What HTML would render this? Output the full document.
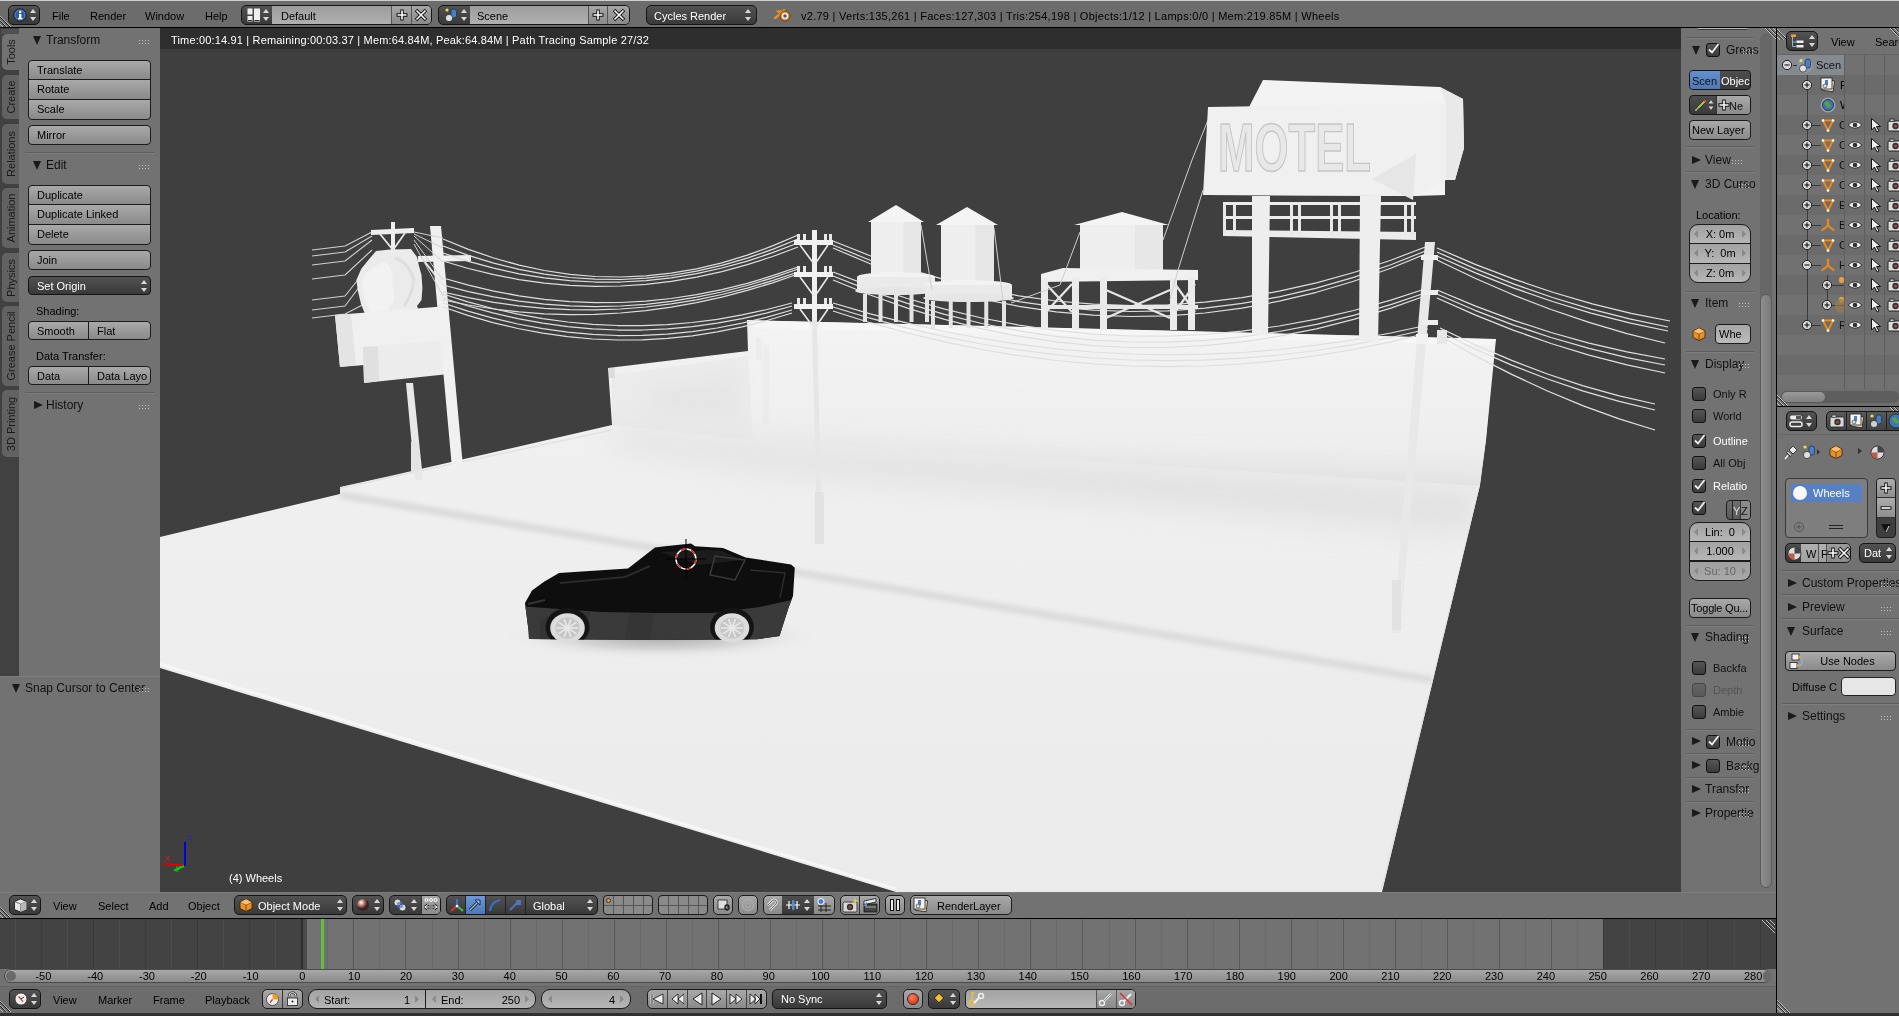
<!DOCTYPE html>
<html><head><meta charset="utf-8">
<style>
*{box-sizing:border-box;margin:0;padding:0}
html,body{width:1899px;height:1016px;overflow:hidden}
body{will-change:transform}
body{background:#727272;font-family:"Liberation Sans",sans-serif;font-size:11px;color:#000;position:relative}
.a{position:absolute}
.t{position:absolute;white-space:nowrap;line-height:11px}
.w{color:#fff}
.b{position:absolute;border:1px solid #1c1c1c;border-radius:4px;background:linear-gradient(#a9a9a9,#8a8a8a);white-space:nowrap;line-height:17px;padding-top:1px;overflow:hidden}
.m{position:absolute;border:1px solid #151515;border-radius:4px;background:linear-gradient(#525252,#393939);color:#fff;white-space:nowrap;line-height:17px;padding-top:1px;overflow:hidden}
.n{position:absolute;border:1px solid #1c1c1c;border-radius:9px;background:linear-gradient(#a2a2a2,#b6b6b6);white-space:nowrap;line-height:17px;padding-top:1px;overflow:hidden}
.tf{position:absolute;background:linear-gradient(#9c9c9c,#b0b0b0)}
.sep{position:absolute;height:1px;background:#5e5e5e;border-bottom:1px solid #7e7e7e;height:2px}
.tri{position:absolute;width:0;height:0;border-left:4.5px solid transparent;border-right:4.5px solid transparent;border-top:9px solid #1a1a1a}
.trr{position:absolute;width:0;height:0;border-top:4.5px solid transparent;border-bottom:4.5px solid transparent;border-left:9px solid #1a1a1a}
.grip{position:absolute;width:11px;height:5px;background-image:radial-gradient(circle,#c8c8c8 0.7px,transparent 0.9px);background-size:3px 3px;opacity:.9}
.ck{position:absolute;width:14px;height:14px;border:1px solid #111;border-radius:3px;background:linear-gradient(#555,#3a3a3a)}
.ud{position:absolute;width:6px;height:12px}
.ud:before{content:"";position:absolute;left:0;top:0;border-left:3px solid transparent;border-right:3px solid transparent;border-bottom:4px solid #d8d8d8}
.ud:after{content:"";position:absolute;left:0;bottom:0;border-left:3px solid transparent;border-right:3px solid transparent;border-top:4px solid #d8d8d8}
.tab{position:absolute;left:2px;width:17px;border-radius:5px 0 0 5px;background:#636363}
.tab span{position:absolute;left:50%;top:50%;transform:translate(-50%,-50%) rotate(-90deg);white-space:nowrap;line-height:11px;color:#1a1a1a}
.vl{position:absolute;width:1px}
</style></head><body>

<!-- ============ INFO HEADER ============ -->
<div class="a" style="left:0;top:0;width:1899px;height:27px;background:#6c6c6c"></div>
<div class="a" style="left:0;top:0;width:1899px;height:1px;background:#d0d0d0"></div>
<div class="a" style="left:0;top:27px;width:1899px;height:1px;background:#000"></div>


<!-- corner hatch -->
<svg class="a" style="left:0;top:13px" width="14" height="14"><path d="M0 3 L11 14 M0 7 L7 14 M0 11 L3 14" stroke="#b0b0b0" stroke-width="1"/><path d="M0 4 L10 14 M0 8 L6 14" stroke="#222" stroke-width="1"/></svg>
<!-- info editor btn -->
<div class="m" style="left:8px;top:5px;width:32px;height:20px;border-radius:5px"></div>
<svg class="a" style="left:13px;top:8px" width="14" height="14"><circle cx="7" cy="7" r="6.2" fill="#2d5b9c" stroke="#0c1a30" stroke-width="1"/><circle cx="7" cy="7" r="5" fill="none" stroke="#7ea0d0" stroke-width=".6"/><rect x="6" y="6" width="2.4" height="4.5" fill="#fff"/><rect x="5" y="10" width="4.4" height="1.3" fill="#fff"/><circle cx="7.2" cy="4" r="1.2" fill="#fff"/></svg>
<div class="ud" style="left:30px;top:9px"></div>
<div class="t" style="left:52px;top:11px">File</div>
<div class="t" style="left:90px;top:11px">Render</div>
<div class="t" style="left:145px;top:11px">Window</div>
<div class="t" style="left:205px;top:11px">Help</div>

<!-- layout group -->
<div class="m" style="left:241px;top:5px;width:191px;height:20px;border-radius:5px"></div>
<div class="tf" style="left:272px;top:6px;width:120px;height:18px"></div>
<div class="a" style="left:392px;top:6px;width:39px;height:18px;background:linear-gradient(#a6a6a6,#8a8a8a);border-radius:0 4px 4px 0"></div>
<div class="a" style="left:391px;top:6px;width:1px;height:18px;background:#555"></div>
<div class="a" style="left:411px;top:6px;width:1px;height:18px;background:#555"></div>
<svg class="a" style="left:247px;top:8px" width="14" height="14"><rect x="0.5" y="0.5" width="5" height="6" fill="#eee"/><rect x="0.5" y="8" width="5" height="5.5" fill="#eee"/><rect x="7" y="0.5" width="6" height="13" fill="#eee"/><path d="M1 12.5h4M7.5 12.5h5" stroke="#333"/></svg>
<div class="ud" style="left:263px;top:9px"></div>
<div class="t" style="left:281px;top:11px">Default</div>
<svg class="a" style="left:395px;top:8px" width="14" height="14"><path d="M7 1.5v11M1.5 7h11" stroke="#111" stroke-width="3.4"/><path d="M7 2.5v9M2.5 7h9" stroke="#fff" stroke-width="1.6"/></svg>
<svg class="a" style="left:414px;top:8px" width="14" height="14"><path d="M2 2L12 12M12 2L2 12" stroke="#111" stroke-width="3.4"/><path d="M2.5 2.5L11.5 11.5M11.5 2.5L2.5 11.5" stroke="#fff" stroke-width="1.6"/></svg>

<!-- scene group -->
<div class="m" style="left:438px;top:5px;width:192px;height:20px;border-radius:5px"></div>
<div class="tf" style="left:470px;top:6px;width:118px;height:18px"></div>
<div class="a" style="left:588px;top:6px;width:41px;height:18px;background:linear-gradient(#a6a6a6,#8a8a8a);border-radius:0 4px 4px 0"></div>
<div class="a" style="left:588px;top:6px;width:1px;height:18px;background:#555"></div>
<div class="a" style="left:607px;top:6px;width:1px;height:18px;background:#555"></div>
<svg class="a" style="left:443px;top:7px" width="16" height="16"><circle cx="4" cy="3" r="1.6" fill="#e8e060"/><rect x="8" y="2" width="5.5" height="9" rx="2.5" fill="#4a7ec8" stroke="#1b2b44" stroke-width=".7"/><circle cx="6" cy="11" r="3.6" fill="#e0e0e0" stroke="#222" stroke-width=".7"/></svg>
<div class="ud" style="left:461px;top:9px"></div>
<div class="t" style="left:477px;top:11px">Scene</div>
<svg class="a" style="left:591px;top:8px" width="14" height="14"><path d="M7 1.5v11M1.5 7h11" stroke="#111" stroke-width="3.4"/><path d="M7 2.5v9M2.5 7h9" stroke="#fff" stroke-width="1.6"/></svg>
<svg class="a" style="left:612px;top:8px" width="14" height="14"><path d="M2 2L12 12M12 2L2 12" stroke="#111" stroke-width="3.4"/><path d="M2.5 2.5L11.5 11.5M11.5 2.5L2.5 11.5" stroke="#fff" stroke-width="1.6"/></svg>

<!-- render engine -->
<div class="m" style="left:646px;top:5px;width:111px;height:20px;border-radius:5px"></div>
<div class="t w" style="left:654px;top:11px">Cycles Render</div>
<div class="ud" style="left:745px;top:9px"></div>

<!-- blender logo -->
<svg class="a" style="left:774px;top:7px" width="18" height="16"><path d="M1 11 L7 6.5 L4.5 4.5 L9 4.5 L10 3" stroke="#f0902a" stroke-width="2.2" fill="none" stroke-linecap="round"/><circle cx="11" cy="9" r="5" fill="#f08a20" stroke="#3a2000" stroke-width=".6"/><circle cx="11" cy="9" r="3" fill="#fff"/><circle cx="11" cy="9" r="1.8" fill="#2a5aa8"/></svg>
<div class="t" style="left:801px;top:11px;letter-spacing:.27px">v2.79 | Verts:135,261 | Faces:127,303 | Tris:254,198 | Objects:1/12 | Lamps:0/0 | Mem:219.85M | Wheels</div>


<!-- ============ LEFT TOOL SHELF ============ -->
<div class="a" style="left:0;top:28px;width:19px;height:648px;background:#414141"></div>
<div class="a" style="left:19px;top:28px;width:141px;height:648px;background:#727272"></div>

<div class="a" style="left:1px;top:29px;width:18px;height:5px;background:#505050"></div>
<div class="tab" style="top:34px;height:36px;background:#727272"><span>Tools</span></div>
<div class="tab" style="top:75px;height:44px;background:#626262"><span>Create</span></div>
<div class="tab" style="top:124px;height:60px;background:#626262"><span>Relations</span></div>
<div class="tab" style="top:188px;height:60px;background:#626262"><span>Animation</span></div>
<div class="tab" style="top:253px;height:49px;background:#626262"><span>Physics</span></div>
<div class="tab" style="top:306px;height:80px;background:#626262"><span>Grease Pencil</span></div>
<div class="tab" style="top:390px;height:67px;background:#626262"><span>3D Printing</span></div>
<div class="tri" style="left:33px;top:36px"></div><div class="t" style="left:46px;top:34px;font-size:12px;line-height:12px;color:#111">Transform</div><div class="grip" style="left:138px;top:39px"></div>
<div class="b" style="left:28px;top:60px;width:123px;height:20px;border-radius:4px 4px 0 0;padding-left:8px;">Translate</div>
<div class="b" style="left:28px;top:79px;width:123px;height:21px;border-radius:0;padding-left:8px;">Rotate</div>
<div class="b" style="left:28px;top:99px;width:123px;height:21px;border-radius:0 0 4px 4px;padding-left:8px;">Scale</div>
<div class="b" style="left:28px;top:125px;width:123px;height:20px;border-radius:4px;padding-left:8px;">Mirror</div>
<div class="sep" style="left:25px;top:152px;width:129px"></div>
<div class="tri" style="left:33px;top:161px"></div><div class="t" style="left:46px;top:159px;font-size:12px;line-height:12px;color:#111">Edit</div><div class="grip" style="left:138px;top:164px"></div>
<div class="b" style="left:28px;top:185px;width:123px;height:20px;border-radius:4px 4px 0 0;padding-left:8px;">Duplicate</div>
<div class="b" style="left:28px;top:204px;width:123px;height:21px;border-radius:0;padding-left:8px;">Duplicate Linked</div>
<div class="b" style="left:28px;top:224px;width:123px;height:21px;border-radius:0 0 4px 4px;padding-left:8px;">Delete</div>
<div class="b" style="left:28px;top:250px;width:123px;height:20px;border-radius:4px;padding-left:8px;">Join</div>
<div class="m" style="left:28px;top:276px;width:123px;height:19px;border-radius:4px;padding-left:8px;">Set Origin</div>
<div class="ud" style="left:141px;top:280px"></div>
<div class="t" style="left:36px;top:306px">Shading:</div>
<div class="b" style="left:28px;top:321px;width:61px;height:19px;border-radius:4px 0 0 4px;padding-left:8px;">Smooth</div>
<div class="b" style="left:88px;top:321px;width:63px;height:19px;border-radius:0 4px 4px 0;padding-left:8px;">Flat</div>
<div class="t" style="left:36px;top:351px">Data Transfer:</div>
<div class="b" style="left:28px;top:366px;width:61px;height:19px;border-radius:4px 0 0 4px;padding-left:8px;">Data</div>
<div class="b" style="left:88px;top:366px;width:63px;height:19px;border-radius:0 4px 4px 0;padding-left:8px;">Data Layo</div>
<div class="sep" style="left:25px;top:392px;width:129px"></div>
<div class="trr" style="left:34px;top:400.5px"></div><div class="t" style="left:46px;top:399px;font-size:12px;line-height:12px;color:#111">History</div><div class="grip" style="left:138px;top:404px"></div>


<!-- operator panel -->
<div class="a" style="left:0;top:676px;width:160px;height:216px;background:#727272;border-top:1px solid #7c7c7c"></div>

<div class="tri" style="left:12px;top:684px"></div><div class="t"  style="left:25px;top:682px;font-size:12px;line-height:12px;color:#111">Snap Cursor to Center</div>
<div class="grip" style="left:138px;top:687px"></div>

<!-- ============ VIEWPORT ============ -->
<div class="a" style="left:160px;top:28px;width:1521px;height:864px;background:#3f3f3f;overflow:hidden">
  <!--SCENE--><svg class="a" style="left:-160px;top:-28px" width="1899" height="1016" viewBox="0 0 1899 1016"><defs><linearGradient id="gnd" x1="0" y1="0" x2="0" y2="1"><stop offset="0" stop-color="#f1f1f1"/><stop offset="1" stop-color="#ebebeb"/></linearGradient><linearGradient id="wall" x1="0" y1="0" x2="0" y2="1"><stop offset="0" stop-color="#f3f3f3"/><stop offset=".75" stop-color="#eeeeee"/><stop offset="1" stop-color="#e6e6e6"/></linearGradient><radialGradient id="shad" cx="50%" cy="50%" r="50%"><stop offset="0" stop-color="#a8a8a8"/><stop offset=".55" stop-color="#d4d4d4"/><stop offset="1" stop-color="#eeeeee" stop-opacity="0"/></radialGradient><filter id="nz" x="0" y="0" width="100%" height="100%"><feTurbulence type="fractalNoise" baseFrequency="1.3" numOctaves="1" seed="3"/><feColorMatrix values="0 0 0 0 0  0 0 0 0 0  0 0 0 0 0  0 0 0 -1.2 0.75"/><feComposite in2="SourceGraphic" operator="in"/></filter><filter id="bl" x="-20%" y="-50%" width="140%" height="200%"><feGaussianBlur stdDeviation="8"/></filter><filter id="bl2" x="-20%" y="-50%" width="140%" height="200%"><feGaussianBlur stdDeviation="14"/></filter><filter id="bl3" x="-5%" y="-50%" width="110%" height="200%"><feGaussianBlur stdDeviation="2"/></filter></defs><polyline points="312.0,256.0 345.0,252.0 372.0,236.0" fill="none" stroke="#d0d0d0" stroke-width="1.1" stroke-linejoin="round" /><polyline points="312.0,265.0 345.0,261.0 372.0,240.0" fill="none" stroke="#d0d0d0" stroke-width="1.1" stroke-linejoin="round" /><polyline points="312.0,279.0 345.0,275.0 372.0,250.0" fill="none" stroke="#d0d0d0" stroke-width="1.1" stroke-linejoin="round" /><polyline points="312.0,300.0 345.0,296.0 372.0,262.0" fill="none" stroke="#d0d0d0" stroke-width="1.1" stroke-linejoin="round" /><polyline points="312.0,310.0 345.0,306.0 372.0,270.0" fill="none" stroke="#d0d0d0" stroke-width="1.1" stroke-linejoin="round" /><polyline points="312.0,318.0 345.0,314.0 372.0,300.0" fill="none" stroke="#d0d0d0" stroke-width="1.1" stroke-linejoin="round" /><polyline points="312.0,250.0 345.0,246.0 372.0,232.0" fill="none" stroke="#d0d0d0" stroke-width="1.1" stroke-linejoin="round" /><clipPath id="silclip"><polygon points="160,537 340,494 340,487 390,476 612,425 608,368 748,351 747,320 1496,339 1486,440 1480,485 1382,892 896,892 160,668"/></clipPath><polygon points="160,537 340,494 340,487 390,476 612,425 608,368 748,351 747,320 1496,339 1486,440 1480,485 1382,892 896,892 160,668" fill="url(#gnd)" /><g clip-path="url(#silclip)"><polygon points="753,322 1494,340 1486,440 1480,486 753,440" fill="url(#wall)" /><polygon points="747,320 1496,339 1494,345 754,328" fill="#f6f6f6" /><polygon points="612,375 748,356 753,440 612,425" fill="#ebebeb" /><polygon points="650,388 735,375 740,420 650,412" fill="#e2e2e2" opacity=".6" filter="url(#bl)"/><polygon points="612,428 753,442 1481,487 1474,535 753,470 612,446" fill="#d8d8d8" opacity=".55" filter="url(#bl2)"/><polygon points="340,491 1432,676 1432,684 340,499" fill="#dcdcdc" filter="url(#bl3)"/><polyline points="340.0,488.0 612.0,430.0" fill="none" stroke="#e2e2e2" stroke-width="1.5" stroke-linejoin="round" /><polyline points="160.0,664.0 896.0,889.0" fill="none" stroke="#f6f6f6" stroke-width="3" stroke-linejoin="round" /><polyline points="1382.0,889.0 1480.0,486.0" fill="none" stroke="#e2e2e2" stroke-width="2" stroke-linejoin="round" /></g><polygon points="376,251 390,249.6 411,249 417,257 419,266 421.5,275 422.4,288 421.5,300 417,306 418,308.5 415,312 365,314 361,304 357.7,290 356.4,280 361.3,268.7 369.2,259" fill="#ebebeb" /><path d="M385 262 Q395 270 392 285 Q398 298 388 310 L370 312 Q362 296 362 282 Q366 268 385 262Z" fill="#f2f2f2"/><path d="M395 258 Q408 262 414 280 Q412 296 404 306" fill="none" stroke="#d8d8d8" stroke-width="3" opacity=".7"/><polygon points="335,315 448,306 450,358 340,367" fill="#f0f0f0" /><polygon points="335,315 351,314 356,365 340,367" fill="#e4e4e4" /><polygon points="363,347 448,340 449,374 364,383" fill="#ececec" /><polygon points="363,347 378,346 379,381 364,383" fill="#e0e0e0" /><polygon points="430,226 441,226 463,467 452,468" fill="#f0f0f0" /><polygon points="418,256 471,255 471,261 418,262" fill="#efefef" /><polyline points="425.0,262.0 443.0,285.0" fill="none" stroke="#e8e8e8" stroke-width="2" stroke-linejoin="round" /><polygon points="406,383 413,383 423,480 415,480" fill="#e8e8e8" /><rect x="411" y="442" width="8" height="30" fill="#e4e4e4" /><polygon points="371,230 414,228 414,233 371,235" fill="#eeeeee" /><rect x="391" y="222" width="4" height="30" fill="#eeeeee" /><polyline points="380.0,234.0 393.0,250.0 405.0,233.0" fill="none" stroke="#e8e8e8" stroke-width="1.8" stroke-linejoin="round" /><polyline points="443.0,239.0 468.4,249.3 493.7,258.0 519.1,265.1 544.4,270.5 569.8,274.3 595.1,276.5 620.5,277.0 645.9,275.9 671.2,273.2 696.6,268.8 721.9,262.8 747.3,255.2 772.6,245.9 798.0,235.0" fill="none" stroke="#dedede" stroke-width="1.25" stroke-linejoin="round" /><polyline points="443.0,246.0 468.4,255.3 493.7,263.1 519.1,269.4 544.4,274.2 569.8,277.5 595.1,279.2 620.5,279.5 645.9,278.2 671.2,275.5 696.6,271.2 721.9,265.4 747.3,258.1 772.6,249.3 798.0,239.0" fill="none" stroke="#dedede" stroke-width="1.25" stroke-linejoin="round" /><polyline points="443.0,253.0 468.4,261.3 493.7,268.2 519.1,273.8 544.4,277.9 569.8,280.7 595.1,282.0 620.5,282.0 645.9,280.6 671.2,277.8 696.6,273.6 721.9,268.0 747.3,261.1 772.6,252.7 798.0,243.0" fill="none" stroke="#dedede" stroke-width="1.25" stroke-linejoin="round" /><polyline points="443.0,261.0 468.4,268.5 493.7,274.7 519.1,279.6 544.4,283.1 569.8,285.4 595.1,286.3 620.5,286.0 645.9,284.3 671.2,281.4 696.6,277.1 721.9,271.6 747.3,264.7 772.6,256.5 798.0,247.0" fill="none" stroke="#dedede" stroke-width="1.25" stroke-linejoin="round" /><polyline points="443.0,278.0 468.4,285.2 493.7,291.1 519.1,295.8 544.4,299.3 569.8,301.6 595.1,302.7 620.5,302.5 645.9,301.1 671.2,298.5 696.6,294.6 721.9,289.6 747.3,283.3 772.6,275.7 798.0,267.0" fill="none" stroke="#dedede" stroke-width="1.25" stroke-linejoin="round" /><polyline points="443.0,285.0 468.4,291.6 493.7,296.9 519.1,301.1 544.4,304.1 569.8,305.9 595.1,306.6 620.5,306.0 645.9,304.3 671.2,301.3 696.6,297.2 721.9,292.0 747.3,285.5 772.6,277.8 798.0,269.0" fill="none" stroke="#dedede" stroke-width="1.25" stroke-linejoin="round" /><polyline points="443.0,292.0 468.4,297.7 493.7,302.4 519.1,305.9 544.4,308.3 569.8,309.7 595.1,309.9 620.5,309.0 645.9,307.0 671.2,303.9 696.6,299.8 721.9,294.5 747.3,288.1 772.6,280.6 798.0,272.0" fill="none" stroke="#dedede" stroke-width="1.25" stroke-linejoin="round" /><polyline points="443.0,300.0 468.4,305.0 493.7,309.0 519.1,311.9 544.4,313.8 569.8,314.6 595.1,314.3 620.5,313.0 645.9,310.6 671.2,307.2 696.6,302.7 721.9,297.1 747.3,290.4 772.6,282.8 798.0,274.0" fill="none" stroke="#dedede" stroke-width="1.25" stroke-linejoin="round" /><polyline points="443.0,294.0 467.9,301.8 492.9,308.5 517.8,314.1 542.7,318.6 567.6,322.0 592.6,324.3 617.5,325.5 642.4,325.6 667.4,324.6 692.3,322.5 717.2,319.3 742.1,314.9 767.1,309.5 792.0,303.0" fill="none" stroke="#dedede" stroke-width="1.25" stroke-linejoin="round" /><polyline points="443.0,298.0 467.9,306.0 492.9,312.9 517.8,318.6 542.7,323.1 567.6,326.6 592.6,328.9 617.5,330.0 642.4,330.0 667.4,328.9 692.3,326.6 717.2,323.1 742.1,318.6 767.1,312.9 792.0,306.0" fill="none" stroke="#dedede" stroke-width="1.25" stroke-linejoin="round" /><polyline points="443.0,303.0 467.9,311.2 492.9,318.2 517.8,324.0 542.7,328.7 567.6,332.1 592.6,334.4 617.5,335.5 642.4,335.4 667.4,334.1 692.3,331.7 717.2,328.0 742.1,323.2 767.1,317.2 792.0,310.0" fill="none" stroke="#dedede" stroke-width="1.25" stroke-linejoin="round" /><polyline points="443.0,307.0 467.9,315.4 492.9,322.6 517.8,328.5 542.7,333.2 567.6,336.7 592.6,339.0 617.5,340.0 642.4,339.8 667.4,338.4 692.3,335.8 717.2,331.9 742.1,326.8 767.1,320.5 792.0,313.0" fill="none" stroke="#dedede" stroke-width="1.25" stroke-linejoin="round" /><polyline points="414.0,232.0 443.0,238.0" fill="none" stroke="#d0d0d0" stroke-width="1" stroke-linejoin="round" /><polyline points="414.0,234.0 443.0,248.0" fill="none" stroke="#d0d0d0" stroke-width="1" stroke-linejoin="round" /><polyline points="414.0,236.0 443.0,262.0" fill="none" stroke="#d0d0d0" stroke-width="1" stroke-linejoin="round" /><polyline points="414.0,240.0 443.0,280.0" fill="none" stroke="#d0d0d0" stroke-width="1" stroke-linejoin="round" /><polyline points="414.0,244.0 443.0,296.0" fill="none" stroke="#d0d0d0" stroke-width="1" stroke-linejoin="round" /><rect x="812" y="230" width="5" height="90" fill="#f0f0f0" /><polygon points="812,320 817,320 822,543 817,543" fill="#e6e6e6" /><rect x="794" y="240" width="39" height="5" fill="#f2f2f2" /><rect x="797" y="234" width="3" height="6" fill="#e8e8e8" /><rect x="803" y="234" width="3" height="6" fill="#e8e8e8" /><rect x="824" y="234" width="3" height="6" fill="#e8e8e8" /><rect x="829" y="234" width="3" height="6" fill="#e8e8e8" /><polyline points="800.0,245.0 814.0,264.0" fill="none" stroke="#eaeaea" stroke-width="1.6" stroke-linejoin="round" /><polyline points="828.0,245.0 815.0,264.0" fill="none" stroke="#eaeaea" stroke-width="1.6" stroke-linejoin="round" /><rect x="794" y="272" width="39" height="5" fill="#f2f2f2" /><rect x="797" y="266" width="3" height="6" fill="#e8e8e8" /><rect x="803" y="266" width="3" height="6" fill="#e8e8e8" /><rect x="824" y="266" width="3" height="6" fill="#e8e8e8" /><rect x="829" y="266" width="3" height="6" fill="#e8e8e8" /><polyline points="800.0,277.0 814.0,296.0" fill="none" stroke="#eaeaea" stroke-width="1.6" stroke-linejoin="round" /><polyline points="828.0,277.0 815.0,296.0" fill="none" stroke="#eaeaea" stroke-width="1.6" stroke-linejoin="round" /><rect x="794" y="304" width="39" height="5" fill="#f2f2f2" /><rect x="797" y="298" width="3" height="6" fill="#e8e8e8" /><rect x="803" y="298" width="3" height="6" fill="#e8e8e8" /><rect x="824" y="298" width="3" height="6" fill="#e8e8e8" /><rect x="829" y="298" width="3" height="6" fill="#e8e8e8" /><polyline points="800.0,309.0 814.0,328.0" fill="none" stroke="#eaeaea" stroke-width="1.6" stroke-linejoin="round" /><polyline points="828.0,309.0 815.0,328.0" fill="none" stroke="#eaeaea" stroke-width="1.6" stroke-linejoin="round" /><rect x="756" y="338" width="6" height="22" fill="#ececec" /><rect x="815" y="492" width="9" height="52" fill="#e2e2e2" /><rect x="609" y="368" width="6" height="10" fill="#dcdcdc" /><rect x="763" y="345" width="6" height="80" fill="#e8e8e8" opacity=".5"/><polyline points="833.0,241.0 870.2,255.8 907.4,268.8 944.6,279.7 981.8,288.8 1018.9,295.8 1056.1,301.0 1093.3,304.2 1130.5,305.5 1167.7,304.8 1204.9,302.2 1242.1,297.7 1279.2,291.2 1316.4,282.8 1353.6,272.5 1390.8,260.2 1428.0,246.0" fill="none" stroke="#dedede" stroke-width="1.2" stroke-linejoin="round" /><polyline points="833.0,245.0 870.2,260.3 907.4,273.6 944.6,284.9 981.8,294.2 1018.9,301.6 1056.1,306.9 1093.3,310.2 1130.5,311.5 1167.7,310.8 1204.9,308.1 1242.1,303.4 1279.2,296.8 1316.4,288.1 1353.6,277.4 1390.8,264.7 1428.0,250.0" fill="none" stroke="#dedede" stroke-width="1.2" stroke-linejoin="round" /><polyline points="833.0,248.0 870.2,263.8 907.4,277.5 944.6,289.2 981.8,298.8 1018.9,306.3 1056.1,311.8 1093.3,315.2 1130.5,316.5 1167.7,315.8 1204.9,313.0 1242.1,308.2 1279.2,301.2 1316.4,292.3 1353.6,281.2 1390.8,268.2 1428.0,253.0" fill="none" stroke="#dedede" stroke-width="1.2" stroke-linejoin="round" /><polyline points="833.0,272.0 870.2,286.1 907.4,298.5 944.6,309.1 981.8,318.0 1018.9,325.1 1056.1,330.5 1093.3,334.1 1130.5,336.0 1167.7,336.1 1204.9,334.5 1242.1,331.1 1279.2,326.0 1316.4,319.1 1353.6,310.5 1390.8,300.1 1428.0,288.0" fill="none" stroke="#dedede" stroke-width="1.2" stroke-linejoin="round" /><polyline points="833.0,276.0 870.2,290.6 907.4,303.4 944.6,314.3 981.8,323.5 1018.9,330.8 1056.1,336.4 1093.3,340.1 1130.5,342.0 1167.7,342.1 1204.9,340.4 1242.1,336.8 1279.2,331.5 1316.4,324.3 1353.6,315.4 1390.8,304.6 1428.0,292.0" fill="none" stroke="#dedede" stroke-width="1.2" stroke-linejoin="round" /><polyline points="833.0,280.0 870.2,295.0 907.4,308.1 944.6,319.4 981.8,328.8 1018.9,336.2 1056.1,341.9 1093.3,345.6 1130.5,347.5 1167.7,347.5 1204.9,345.6 1242.1,341.9 1279.2,336.2 1316.4,328.8 1353.6,319.4 1390.8,308.1 1428.0,295.0" fill="none" stroke="#dedede" stroke-width="1.2" stroke-linejoin="round" /><polyline points="833.0,303.0 870.2,313.8 907.4,323.2 944.6,331.5 981.8,338.5 1018.9,344.2 1056.1,348.8 1093.3,352.0 1130.5,354.0 1167.7,354.8 1204.9,354.2 1242.1,352.5 1279.2,349.5 1316.4,345.2 1353.6,339.8 1390.8,333.0 1428.0,325.0" fill="none" stroke="#dedede" stroke-width="1.2" stroke-linejoin="round" /><polyline points="833.0,307.0 870.2,318.2 907.4,328.1 944.6,336.7 981.8,344.0 1018.9,350.0 1056.1,354.6 1093.3,358.0 1130.5,360.0 1167.7,360.7 1204.9,360.1 1242.1,358.2 1279.2,355.0 1316.4,350.5 1353.6,344.6 1390.8,337.5 1428.0,329.0" fill="none" stroke="#dedede" stroke-width="1.2" stroke-linejoin="round" /><polyline points="833.0,311.0 870.2,322.7 907.4,333.0 944.6,341.9 981.8,349.5 1018.9,355.7 1056.1,360.5 1093.3,363.9 1130.5,366.0 1167.7,366.7 1204.9,366.0 1242.1,363.9 1279.2,360.5 1316.4,355.7 1353.6,349.5 1390.8,341.9 1428.0,333.0" fill="none" stroke="#dedede" stroke-width="1.2" stroke-linejoin="round" /><polygon points="896,205 924,222 868,222" fill="#f4f4f4" /><rect x="871" y="222" width="50" height="52" fill="#eeeeee" /><rect x="903.5" y="222" width="17.5" height="52" fill="#e6e6e6" /><ellipse cx="896.0" cy="277" rx="39.0" ry="5" fill="#f2f2f2"/><rect x="857" y="277" width="78" height="14" fill="#eaeaea" /><ellipse cx="896.0" cy="291" rx="41.0" ry="4" fill="#e6e6e6"/><rect x="863.0" y="294" width="4" height="28" fill="#e4e4e4" /><rect x="878.5" y="294" width="4" height="28" fill="#e4e4e4" /><rect x="894.0" y="294" width="4" height="28" fill="#e4e4e4" /><rect x="909.5" y="294" width="4" height="28" fill="#e4e4e4" /><rect x="925.0" y="294" width="4" height="28" fill="#e4e4e4" /><polygon points="967,207 998,225 936,225" fill="#f4f4f4" /><rect x="941" y="225" width="53" height="57" fill="#eeeeee" /><rect x="975.45" y="225" width="18.549999999999997" height="57" fill="#e6e6e6" /><ellipse cx="968.5" cy="285" rx="43.5" ry="5" fill="#f2f2f2"/><rect x="925" y="285" width="87" height="13" fill="#eaeaea" /><ellipse cx="968.5" cy="298" rx="45.5" ry="4" fill="#e6e6e6"/><rect x="931.0" y="301" width="4" height="27" fill="#e4e4e4" /><rect x="948.75" y="301" width="4" height="27" fill="#e4e4e4" /><rect x="966.5" y="301" width="4" height="27" fill="#e4e4e4" /><rect x="984.25" y="301" width="4" height="27" fill="#e4e4e4" /><rect x="1002.0" y="301" width="4" height="27" fill="#e4e4e4" /><polygon points="1122,212 1169,225 1074,225" fill="#f4f4f4" /><rect x="1080" y="225" width="83" height="47" fill="#eeeeee" /><rect x="1135" y="225" width="28" height="47" fill="#e7e7e7" /><polygon points="1041,274 1063,268 1198,270 1198,280 1041,282" fill="#f0f0f0" /><rect x="1041" y="278" width="7" height="52" fill="#ebebeb" /><rect x="1072" y="278" width="7" height="52" fill="#ebebeb" /><rect x="1100" y="278" width="7" height="52" fill="#ebebeb" /><rect x="1170" y="278" width="7" height="52" fill="#ebebeb" /><rect x="1188" y="278" width="7" height="52" fill="#ebebeb" /><polyline points="1046.0,284.0 1072.0,312.0" fill="none" stroke="#e6e6e6" stroke-width="2.2" stroke-linejoin="round" /><polyline points="1072.0,284.0 1046.0,312.0" fill="none" stroke="#e6e6e6" stroke-width="2.2" stroke-linejoin="round" /><polyline points="1175.0,284.0 1195.0,312.0" fill="none" stroke="#e6e6e6" stroke-width="2.2" stroke-linejoin="round" /><polyline points="1195.0,284.0 1175.0,312.0" fill="none" stroke="#e6e6e6" stroke-width="2.2" stroke-linejoin="round" /><polyline points="1106.0,290.0 1170.0,318.0" fill="none" stroke="#e6e6e6" stroke-width="2" stroke-linejoin="round" /><polyline points="1106.0,318.0 1170.0,290.0" fill="none" stroke="#e6e6e6" stroke-width="2" stroke-linejoin="round" /><rect x="1041" y="305" width="157" height="4" fill="#e8e8e8" /><polyline points="921.0,225.0 932.0,290.0" fill="none" stroke="#cfcfcf" stroke-width="1" stroke-linejoin="round" /><polyline points="994.0,228.0 1003.0,300.0" fill="none" stroke="#cfcfcf" stroke-width="1" stroke-linejoin="round" /><polyline points="1080.0,232.0 1060.0,285.0 1011.0,303.0" fill="none" stroke="#cfcfcf" stroke-width="1" stroke-linejoin="round" /><polyline points="1163.0,240.0 1192.0,160.0 1208.0,120.0" fill="none" stroke="#cfcfcf" stroke-width="1" stroke-linejoin="round" /><polyline points="1203.0,190.0 1178.0,270.0 1170.0,300.0" fill="none" stroke="#cfcfcf" stroke-width="1" stroke-linejoin="round" /><polygon points="1263,80 1440,87 1463,99 1464,148 1455,180 1445,180 1445,195 1416,196 1208,195 1208,107 1249,107" fill="#f3f3f3" /><polygon points="1208,107 1446,103 1446,180 1416,196 1203,195" fill="#f0f0f0" /><polygon points="1440,87 1463,99 1464,148 1455,180 1446,180 1446,103" fill="#e9e9e9" /><polygon points="1416,154 1372,179 1413,200" fill="#e6e6e6" /><text x="1218" y="171" font-family="Liberation Sans" font-size="68" font-weight="bold" fill="#e8e8e8" stroke="#c6c6c6" stroke-width="1.4" textLength="153" lengthAdjust="spacingAndGlyphs">MOTEL</text><rect x="1223" y="202" width="193" height="3" fill="#ececec" /><rect x="1223" y="216" width="193" height="3" fill="#ececec" /><polygon points="1223,230 1416,232 1416,240 1223,236" fill="#ececec" /><rect x="1223" y="202" width="3" height="34" fill="#e8e8e8" /><rect x="1233" y="202" width="3" height="34" fill="#e8e8e8" /><rect x="1290" y="202" width="3" height="34" fill="#e8e8e8" /><rect x="1298" y="202" width="3" height="34" fill="#e8e8e8" /><rect x="1330" y="202" width="3" height="34" fill="#e8e8e8" /><rect x="1338" y="202" width="3" height="34" fill="#e8e8e8" /><rect x="1404" y="202" width="3" height="34" fill="#e8e8e8" /><rect x="1411" y="202" width="3" height="34" fill="#e8e8e8" /><polygon points="1252,196 1270,196 1268,336 1252,334" fill="#eeeeee" /><polygon points="1360,196 1381,196 1378,342 1359,341" fill="#eeeeee" /><polygon points="1425,242 1435,242 1400,633 1393,633" fill="#e8e8e8" /><rect x="1421" y="255" width="17" height="5" fill="#eeeeee" /><rect x="1421" y="290" width="17" height="5" fill="#eeeeee" /><rect x="1421" y="320" width="17" height="5" fill="#eeeeee" /><rect x="1437" y="330" width="10" height="14" fill="#e8e8e8" /><rect x="1416" y="334" width="12" height="10" fill="#f2f2f2" /><rect x="1392" y="580" width="9" height="50" fill="#e2e2e2" /><polyline points="1437.0,248.0 1475.8,264.6 1514.7,279.4 1553.5,292.5 1592.3,303.8 1631.2,313.3 1670.0,321.0" fill="none" stroke="#e0e0e0" stroke-width="1.25" stroke-linejoin="round" /><polyline points="1437.0,252.0 1475.5,268.9 1514.0,284.1 1552.5,297.5 1591.0,309.1 1629.5,318.9 1668.0,327.0" fill="none" stroke="#e0e0e0" stroke-width="1.25" stroke-linejoin="round" /><polyline points="1437.0,256.0 1475.5,272.9 1514.0,288.1 1552.5,301.5 1591.0,313.1 1629.5,322.9 1668.0,331.0" fill="none" stroke="#e0e0e0" stroke-width="1.25" stroke-linejoin="round" /><polyline points="1437.0,260.0 1475.0,278.3 1513.0,294.8 1551.0,309.5 1589.0,322.4 1627.0,333.6 1665.0,343.0" fill="none" stroke="#e0e0e0" stroke-width="1.25" stroke-linejoin="round" /><polyline points="1437.0,290.0 1475.0,305.9 1513.0,320.1 1551.0,332.5 1589.0,343.1 1627.0,351.9 1665.0,359.0" fill="none" stroke="#e0e0e0" stroke-width="1.25" stroke-linejoin="round" /><polyline points="1437.0,294.0 1475.0,310.3 1513.0,324.8 1551.0,337.5 1589.0,348.4 1627.0,357.6 1665.0,365.0" fill="none" stroke="#e0e0e0" stroke-width="1.25" stroke-linejoin="round" /><polyline points="1437.0,298.0 1475.0,314.9 1513.0,330.1 1551.0,343.5 1589.0,355.1 1627.0,364.9 1665.0,373.0" fill="none" stroke="#e0e0e0" stroke-width="1.25" stroke-linejoin="round" /><polyline points="1440.0,328.0 1475.8,345.1 1511.7,360.4 1547.5,374.0 1583.3,385.8 1619.2,395.8 1655.0,404.0" fill="none" stroke="#e0e0e0" stroke-width="1.25" stroke-linejoin="round" /><polyline points="1440.0,332.0 1475.8,349.4 1511.7,365.1 1547.5,379.0 1583.3,391.1 1619.2,401.4 1655.0,410.0" fill="none" stroke="#e0e0e0" stroke-width="1.25" stroke-linejoin="round" /><polyline points="1440.0,336.0 1475.8,356.1 1511.7,374.4 1547.5,391.0 1583.3,405.8 1619.2,418.8 1655.0,430.0" fill="none" stroke="#e0e0e0" stroke-width="1.25" stroke-linejoin="round" /><ellipse cx="660" cy="636" rx="160" ry="24" fill="url(#shad)"/><clipPath id="carclip"><path d="M529,639 L528.6,631 L525,603 L532,590.5 L544.4,581.4 L559,573 L628,568.4 L655,547.5 L665,546.3 L691,543.5 L695,546.3 L723,548 L745.6,557.6 L791,564.4 L794.8,567.8 L793,596 L788.6,607.5 L779.5,636 L757,639.2 L655,640 Z"/></clipPath><path d="M529,639 L528.6,631 L525,603 L532,590.5 L544.4,581.4 L559,573 L628,568.4 L655,547.5 L665,546.3 L691,543.5 L695,546.3 L723,548 L745.6,557.6 L791,564.4 L794.8,567.8 L793,596 L788.6,607.5 L779.5,636 L757,639.2 L655,640 Z" fill="#0e0e0e"/><g clip-path="url(#carclip)"><path d="M520,606 L600,612 L660,613 L712,613 L760,607 L800,598 L800,650 L520,650Z" fill="#3a3a3a"/><path d="M630,613 L655,613 L650,640 L625,640Z" fill="#353535"/><path d="M540,620 L560,612 L590,612 L585,640 L540,640Z" fill="#2e2e2e" opacity=".5"/><ellipse cx="567.5" cy="627" rx="22" ry="19" fill="#151515"/><ellipse cx="732" cy="627" rx="22" ry="19" fill="#151515"/><path d="M660,552 L720,550 L742,560 L700,565 Z" fill="#1c1c1c"/><path d="M715,556 L745,560 L735,580 L710,575 Z" fill="none" stroke="#3a3a3a" stroke-width="1.5"/><path d="M560,583 L625,577 L650,566" fill="none" stroke="#2a2a2a" stroke-width="2"/><path d="M750,570 L785,573 L780,598" fill="none" stroke="#2c2c2c" stroke-width="1.5"/><path d="M528,604 L545,600" stroke="#333" stroke-width="2"/></g><ellipse cx="567.5" cy="628" rx="17.3" ry="14.8" fill="#dcdcdc"/><ellipse cx="567.5" cy="628" rx="12" ry="10.5" fill="#c6c6c6"/><circle cx="567.5" cy="628" r="3" fill="#e6e6e6"/><line x1="567.5" y1="628" x2="578.5" y2="628.0" stroke="#e8e8e8" stroke-width="1.6"/><line x1="567.5" y1="628" x2="576.4" y2="633.6" stroke="#e8e8e8" stroke-width="1.6"/><line x1="567.5" y1="628" x2="570.9" y2="637.0" stroke="#e8e8e8" stroke-width="1.6"/><line x1="567.5" y1="628" x2="564.1" y2="637.0" stroke="#e8e8e8" stroke-width="1.6"/><line x1="567.5" y1="628" x2="558.6" y2="633.6" stroke="#e8e8e8" stroke-width="1.6"/><line x1="567.5" y1="628" x2="556.5" y2="628.0" stroke="#e8e8e8" stroke-width="1.6"/><line x1="567.5" y1="628" x2="558.6" y2="622.4" stroke="#e8e8e8" stroke-width="1.6"/><line x1="567.5" y1="628" x2="564.1" y2="619.0" stroke="#e8e8e8" stroke-width="1.6"/><line x1="567.5" y1="628" x2="570.9" y2="619.0" stroke="#e8e8e8" stroke-width="1.6"/><line x1="567.5" y1="628" x2="576.4" y2="622.4" stroke="#e8e8e8" stroke-width="1.6"/><ellipse cx="732" cy="628" rx="17.3" ry="14.8" fill="#dcdcdc"/><ellipse cx="732" cy="628" rx="12" ry="10.5" fill="#c6c6c6"/><circle cx="732" cy="628" r="3" fill="#e6e6e6"/><line x1="732" y1="628" x2="743.0" y2="628.0" stroke="#e8e8e8" stroke-width="1.6"/><line x1="732" y1="628" x2="740.9" y2="633.6" stroke="#e8e8e8" stroke-width="1.6"/><line x1="732" y1="628" x2="735.4" y2="637.0" stroke="#e8e8e8" stroke-width="1.6"/><line x1="732" y1="628" x2="728.6" y2="637.0" stroke="#e8e8e8" stroke-width="1.6"/><line x1="732" y1="628" x2="723.1" y2="633.6" stroke="#e8e8e8" stroke-width="1.6"/><line x1="732" y1="628" x2="721.0" y2="628.0" stroke="#e8e8e8" stroke-width="1.6"/><line x1="732" y1="628" x2="723.1" y2="622.4" stroke="#e8e8e8" stroke-width="1.6"/><line x1="732" y1="628" x2="728.6" y2="619.0" stroke="#e8e8e8" stroke-width="1.6"/><line x1="732" y1="628" x2="735.4" y2="619.0" stroke="#e8e8e8" stroke-width="1.6"/><line x1="732" y1="628" x2="740.9" y2="622.4" stroke="#e8e8e8" stroke-width="1.6"/><circle cx="686" cy="559" r="10" fill="none" stroke="#ffffff" stroke-width="1.5"/><circle cx="686" cy="559" r="10" fill="none" stroke="#e02020" stroke-width="1.5" stroke-dasharray="5.2 5.2"/><path d="M686 539V579M666 559H706" stroke="#000" stroke-width="1"/><path d="M185 842V866" stroke="#0000e0" stroke-width="2"/><path d="M163 864L184 865.5" stroke="#e00000" stroke-width="2.2"/><path d="M184 866L174 870.5" stroke="#00d000" stroke-width="2.2"/><text x="187" y="840" font-family="Liberation Sans" font-size="8" fill="#2020e0">Z</text><text x="165" y="861" font-family="Liberation Sans" font-size="8" fill="#e02020">X</text><text x="176" y="870" font-family="Liberation Sans" font-size="8" fill="#20d020">y</text></svg><!--/SCENE-->
<div id="band" class="a" style="left:0;top:0;width:1521px;height:21px;background:#2e2e2e"></div>
<div class="t w" style="left:11px;top:7px;letter-spacing:.17px">Time:00:14.91 | Remaining:00:03.37 | Mem:64.84M, Peak:64.84M | Path Tracing Sample 27/32</div>
<div class="t w" style="left:69px;top:845px">(4) Wheels</div>
</div>

<!-- ============ N PANEL ============ -->
<div class="a" style="left:1681px;top:28px;width:95px;height:864px;background:#727272"></div>
<div class="a" style="left:1760px;top:33px;width:12px;height:855px;border-radius:6px;background:#676767"></div>
<div class="a" style="left:1760px;top:294px;width:12px;height:594px;border-radius:6px;background:linear-gradient(90deg,#8e8e8e,#7a7a7a);border:1px solid #5c5c5c"></div>
<svg class="a" style="left:1764px;top:28px" width="12" height="12"><path d="M1 0L12 11M5 0L12 7M9 0L12 3" stroke="#c0c0c0" stroke-width="1"/><path d="M2 0L12 10M6 0L12 6" stroke="#333" stroke-width="1"/></svg>
<div class="a" style="left:1697px;top:28px;width:51px;height:2px;border-bottom:1px solid #3a3a3a;border-radius:0 0 4px 4px;background:#b8b8b8"></div>
<div class="sep" style="left:1686px;top:37px;width:68px"></div>
<div class="tri" style="left:1692px;top:46px"></div><div class="ck" style="left:1706px;top:43px;"></div><svg class="a" style="left:1706px;top:41px" width="15" height="15"><path d="M3 8.5L6 11.5L12.5 3" stroke="#f0f0f0" stroke-width="1.8" fill="none"/></svg><div class="t" style="left:1726px;top:44px;font-size:12px;line-height:12px;color:#111">Greas</div><div class="grip" style="left:1742px;top:49px"></div>
<div class="a" style="left:1689px;top:70px;width:62px;height:20px;border:1px solid #151515;border-radius:4px;background:linear-gradient(#4e4e4e,#3a3a3a);overflow:hidden"><div class="a" style="left:0;top:0;width:30px;height:18px;background:linear-gradient(#6390d0,#4e78b8)"></div><div class="t" style="left:2px;top:5px;color:#111">Scen</div><div class="t" style="left:31px;top:5px;color:#fff">Objec</div></div>
<div class="a" style="left:1689px;top:95px;width:62px;height:20px;border:1px solid #151515;border-radius:4px;background:linear-gradient(#4e4e4e,#3a3a3a);overflow:hidden"><div class="a" style="left:26px;top:0;width:36px;height:18px;background:linear-gradient(#aaa,#8c8c8c);border-left:1px solid #333"></div><div class="t" style="left:39px;top:5px;color:#111">Ne</div></div>
<svg class="a" style="left:1693px;top:97px" width="16" height="16"><path d="M2 14L4 10L12 2L14 4L6 12Z" fill="#9cc24a" stroke="#222" stroke-width=".8"/><path d="M11 3L13 5" stroke="#e04040" stroke-width="2"/><path d="M2 14L3 11.5L4.5 13Z" fill="#eee"/></svg><div class="ud" style="left:1708px;top:99px;transform:scale(.8)"></div>
<svg class="a" style="left:1717px;top:98px" width="14" height="14"><path d="M7 1.5v11M1.5 7h11" stroke="#111" stroke-width="3.4"/><path d="M7 2.5v9M2.5 7h9" stroke="#fff" stroke-width="1.6"/></svg>
<div class="b" style="left:1689px;top:120px;width:62px;height:20px;padding-left:2px">New Layer</div>
<div class="sep" style="left:1686px;top:146px;width:68px"></div>
<div class="trr" style="left:1692px;top:155.5px"></div><div class="t" style="left:1705px;top:154px;font-size:12px;line-height:12px;color:#111">View</div><div class="grip" style="left:1731px;top:159px"></div>
<div class="sep" style="left:1686px;top:171px;width:68px"></div>
<div class="tri" style="left:1691px;top:180px"></div><div class="t" style="left:1705px;top:178px;font-size:12px;line-height:12px;color:#111">3D Curso</div><div class="grip" style="left:1738px;top:183px"></div>
<div class="t" style="left:1696px;top:210px">Location:</div>
<div class="n" style="left:1689px;top:224px;width:62px;height:21px;border-radius:9px 9px 0 0;text-align:center">X: 0m</div><div class="a" style="left:1694px;top:230px;border-top:4px solid transparent;border-bottom:4px solid transparent;border-right:4px solid #8a8a8a"></div><div class="a" style="left:1742px;top:230px;border-top:4px solid transparent;border-bottom:4px solid transparent;border-left:4px solid #8a8a8a"></div>
<div class="n" style="left:1689px;top:243px;width:62px;height:21px;border-radius:0;text-align:center">Y:&nbsp; 0m</div><div class="a" style="left:1694px;top:249px;border-top:4px solid transparent;border-bottom:4px solid transparent;border-right:4px solid #8a8a8a"></div><div class="a" style="left:1742px;top:249px;border-top:4px solid transparent;border-bottom:4px solid transparent;border-left:4px solid #8a8a8a"></div>
<div class="n" style="left:1689px;top:263px;width:62px;height:20px;border-radius:0 0 9px 9px;text-align:center">Z: 0m</div><div class="a" style="left:1694px;top:269px;border-top:4px solid transparent;border-bottom:4px solid transparent;border-right:4px solid #8a8a8a"></div><div class="a" style="left:1742px;top:269px;border-top:4px solid transparent;border-bottom:4px solid transparent;border-left:4px solid #8a8a8a"></div>
<div class="sep" style="left:1686px;top:291px;width:68px"></div>
<div class="tri" style="left:1691px;top:299px"></div><div class="t" style="left:1705px;top:297px;font-size:12px;line-height:12px;color:#111">Item</div><div class="grip" style="left:1738px;top:302px"></div>
<svg class="a" style="left:1692px;top:327px" width="14" height="14"><path d="M7 1L13 4V10.5L7 13.5L1 10.5V4Z" fill="#e8902a" stroke="#3a2000" stroke-width=".8"/><path d="M1 4L7 7L13 4M7 7V13.5" stroke="#6a3a08" stroke-width=".8" fill="none"/><path d="M1.5 4.2L7 1.3L12.5 4.2L7 6.8Z" fill="#f8c070"/></svg>
<div class="b" style="left:1715px;top:324px;width:36px;height:20px;padding-left:3px;background:linear-gradient(#a6a6a6,#bcbcbc)">Whe</div>
<div class="sep" style="left:1686px;top:351px;width:68px"></div>
<div class="tri" style="left:1691px;top:360px"></div><div class="t" style="left:1705px;top:358px;font-size:12px;line-height:12px;color:#111">Display</div><div class="grip" style="left:1738px;top:363px"></div>
<div class="ck" style="left:1692px;top:387px;"></div><div class="t" style="left:1713px;top:389px;color:#111">Only R</div>
<div class="ck" style="left:1692px;top:409px;"></div><div class="t" style="left:1713px;top:411px;color:#111">World</div>
<div class="ck" style="left:1692px;top:434px;"></div><svg class="a" style="left:1692px;top:432px" width="15" height="15"><path d="M3 8.5L6 11.5L12.5 3" stroke="#f0f0f0" stroke-width="1.8" fill="none"/></svg><div class="t" style="left:1713px;top:436px;color:#fff">Outline</div>
<div class="ck" style="left:1692px;top:456px;"></div><div class="t" style="left:1713px;top:458px;color:#111">All Obj</div>
<div class="ck" style="left:1692px;top:479px;"></div><svg class="a" style="left:1692px;top:477px" width="15" height="15"><path d="M3 8.5L6 11.5L12.5 3" stroke="#f0f0f0" stroke-width="1.8" fill="none"/></svg><div class="t" style="left:1713px;top:481px;color:#fff">Relatio</div>
<div class="ck" style="left:1692px;top:501px;"></div><svg class="a" style="left:1692px;top:499px" width="15" height="15"><path d="M3 8.5L6 11.5L12.5 3" stroke="#f0f0f0" stroke-width="1.8" fill="none"/></svg><div class="a" style="left:1726px;top:500px;width:25px;height:20px;border:1px solid #1c1c1c;border-radius:4px;background:linear-gradient(#6e6e6e,#5a5a5a);overflow:hidden"><div class="a" style="left:5px;top:0;width:1px;height:18px;background:#222"></div><div class="a" style="left:13px;top:0;width:11px;height:18px;background:#8a8a8a;border-left:1px solid #333"></div><div class="t" style="left:6px;top:5px;color:#ddd">Y</div><div class="t" style="left:14px;top:5px;color:#111">Z</div></div>
<div class="n" style="left:1689px;top:522px;width:62px;height:20px;border-radius:9px 9px 0 0;text-align:center;">Lin:&nbsp; 0</div><div class="a" style="left:1694px;top:528px;border-top:4px solid transparent;border-bottom:4px solid transparent;border-right:4px solid #8a8a8a"></div><div class="a" style="left:1742px;top:528px;border-top:4px solid transparent;border-bottom:4px solid transparent;border-left:4px solid #8a8a8a"></div>
<div class="n" style="left:1689px;top:541px;width:62px;height:20px;border-radius:0;text-align:center;">1.000</div><div class="a" style="left:1694px;top:547px;border-top:4px solid transparent;border-bottom:4px solid transparent;border-right:4px solid #8a8a8a"></div><div class="a" style="left:1742px;top:547px;border-top:4px solid transparent;border-bottom:4px solid transparent;border-left:4px solid #8a8a8a"></div>
<div class="n" style="left:1689px;top:561px;width:62px;height:20px;border-radius:0 0 9px 9px;text-align:center;background:linear-gradient(#a0a0a0,#a8a8a8);color:#666;">Su: 10</div><div class="a" style="left:1694px;top:567px;border-top:4px solid transparent;border-bottom:4px solid transparent;border-right:4px solid #8a8a8a"></div><div class="a" style="left:1742px;top:567px;border-top:4px solid transparent;border-bottom:4px solid transparent;border-left:4px solid #8a8a8a"></div>
<div class="b" style="left:1689px;top:598px;width:62px;height:20px;padding-left:1px;letter-spacing:-.2px">Toggle Qu...</div>
<div class="sep" style="left:1686px;top:625px;width:68px"></div>
<div class="tri" style="left:1691px;top:633px"></div><div class="t" style="left:1705px;top:631px;font-size:12px;line-height:12px;color:#111">Shading</div><div class="grip" style="left:1738px;top:636px"></div>
<div class="ck" style="left:1692px;top:661px;"></div><div class="t" style="left:1713px;top:663px;color:#111">Backfa</div>
<div class="ck" style="left:1692px;top:683px;opacity:.45;"></div><div class="t" style="left:1713px;top:685px;color:#555">Depth</div>
<div class="ck" style="left:1692px;top:705px;"></div><div class="t" style="left:1713px;top:707px;color:#111">Ambie</div>
<div class="sep" style="left:1686px;top:729px;width:68px"></div>
<div class="trr" style="left:1692px;top:737px"></div><div class="ck" style="left:1706px;top:735px;"></div><svg class="a" style="left:1706px;top:733px" width="15" height="15"><path d="M3 8.5L6 11.5L12.5 3" stroke="#f0f0f0" stroke-width="1.8" fill="none"/></svg><div class="t" style="left:1726px;top:736px;font-size:12px;line-height:12px;color:#111">Motio</div><div class="grip" style="left:1738px;top:741px"></div>
<div class="sep" style="left:1686px;top:753px;width:68px"></div>
<div class="trr" style="left:1692px;top:761px"></div><div class="ck" style="left:1706px;top:759px;"></div><div class="t" style="left:1726px;top:760px;font-size:12px;line-height:12px;color:#111">Backg</div><div class="grip" style="left:1738px;top:765px"></div>
<div class="sep" style="left:1686px;top:777px;width:68px"></div>
<div class="trr" style="left:1692px;top:784.5px"></div><div class="t" style="left:1705px;top:783px;font-size:12px;line-height:12px;color:#111">Transfor</div><div class="grip" style="left:1738px;top:788px"></div>
<div class="sep" style="left:1686px;top:801px;width:68px"></div>
<div class="trr" style="left:1692px;top:808.5px"></div><div class="t" style="left:1705px;top:807px;font-size:12px;line-height:12px;color:#111">Propertie</div><div class="grip" style="left:1738px;top:812px"></div>


<!-- area splitter -->
<div class="a" style="left:1776px;top:28px;width:1px;height:988px;background:#000"></div>

<!-- ============ OUTLINER ============ -->
<div class="a" style="left:1777px;top:28px;width:122px;height:379px;background:#727272"></div>
<div class="a" style="left:1777px;top:28px;width:122px;height:27px;background:#727272"></div>
<svg class="a" style="left:1777px;top:28px" width="12" height="12"><path d="M0 1L11 12M0 5L7 12M0 9L3 12" stroke="#c0c0c0"/><path d="M0 2L10 12M0 6L6 12" stroke="#333"/></svg>
<svg class="a" style="left:1889px;top:28px" width="10" height="10"><path d="M1 0L10 9M5 0L10 5" stroke="#c0c0c0"/><path d="M2 0L10 8M6 0L10 4" stroke="#333"/></svg>
<div class="m" style="left:1786px;top:31px;width:32px;height:20px;border-radius:5px"></div>
<svg class="a" style="left:1790px;top:34px" width="16" height="15"><rect x="1" y="0.5" width="5" height="2.5" fill="#f0a030"/><path d="M2.5 3V12.5H6M2.5 8H6" stroke="#8ab0e0" fill="none"/><rect x="6.5" y="6.5" width="7" height="2.5" fill="#eee"/><rect x="6.5" y="11" width="7" height="2.5" fill="#eee"/></svg>
<div class="ud" style="left:1809px;top:35px"></div>
<div class="t" style="left:1831px;top:37px">View</div><div class="t" style="left:1875px;top:37px">Search</div>
<div class="a" style="left:1777px;top:54px;width:122px;height:1px;background:#666"></div>
<div class="a" style="left:1777px;top:55px;width:122px;height:20px;background:#717171"></div>
<div class="a" style="left:1777px;top:75px;width:122px;height:20px;background:#6b6b6b"></div>
<div class="a" style="left:1777px;top:95px;width:122px;height:20px;background:#717171"></div>
<div class="a" style="left:1777px;top:115px;width:122px;height:20px;background:#6b6b6b"></div>
<div class="a" style="left:1777px;top:135px;width:122px;height:20px;background:#717171"></div>
<div class="a" style="left:1777px;top:155px;width:122px;height:20px;background:#6b6b6b"></div>
<div class="a" style="left:1777px;top:175px;width:122px;height:20px;background:#717171"></div>
<div class="a" style="left:1777px;top:195px;width:122px;height:20px;background:#6b6b6b"></div>
<div class="a" style="left:1777px;top:215px;width:122px;height:20px;background:#717171"></div>
<div class="a" style="left:1777px;top:235px;width:122px;height:20px;background:#6b6b6b"></div>
<div class="a" style="left:1777px;top:255px;width:122px;height:20px;background:#717171"></div>
<div class="a" style="left:1777px;top:275px;width:122px;height:20px;background:#6b6b6b"></div>
<div class="a" style="left:1777px;top:295px;width:122px;height:20px;background:#717171"></div>
<div class="a" style="left:1777px;top:315px;width:122px;height:20px;background:#6b6b6b"></div>
<div class="a" style="left:1777px;top:335px;width:122px;height:20px;background:#717171"></div>
<div class="a" style="left:1777px;top:355px;width:122px;height:20px;background:#6b6b6b"></div>
<div class="a" style="left:1777px;top:375px;width:122px;height:14px;background:#717171"></div>
<div class="a" style="left:1777px;top:55px;width:67px;height:20px;background:#848a90"></div>
<div class="a" style="left:1844px;top:55px;width:1px;height:334px;background:#5e5e5e"></div>
<div class="a" style="left:1864px;top:55px;width:1px;height:334px;background:#5e5e5e"></div>
<div class="a" style="left:1884px;top:55px;width:1px;height:334px;background:#5e5e5e"></div>
<div class="a" style="left:1807px;top:75px;width:1px;height:250px;background:#3a3a3a"></div>
<div class="a" style="left:1827px;top:275px;width:1px;height:30px;background:#3a3a3a"></div>
<svg class="a" style="left:1781px;top:59px" width="12" height="12"><circle cx="6" cy="6" r="4.6" fill="#d8d8d8" stroke="#222" stroke-width="1"/><path d="M3.5 6h5" stroke="#111" stroke-width="1.1"/></svg><svg class="a" style="left:1796px;top:57px" width="18" height="17"><circle cx="9" cy="8.5" r="8" fill="#8e949a"/><circle cx="5" cy="3.5" r="1.6" fill="#e8e060"/><rect x="9" y="2" width="5.5" height="9" rx="2.5" fill="#4a7ec8" stroke="#1b2b44" stroke-width=".7"/><circle cx="7" cy="11.5" r="3.6" fill="#e0e0e0" stroke="#222" stroke-width=".7"/></svg><div class="a" style="left:1793px;top:65px;width:4px;height:1px;background:#333"></div><div class="t" style="left:1816px;top:60px;color:#111;width:28px;overflow:hidden">Scen</div><svg class="a" style="left:1801px;top:79px" width="12" height="12"><circle cx="6" cy="6" r="4.6" fill="#d8d8d8" stroke="#222" stroke-width="1"/><path d="M3.5 6h5" stroke="#111" stroke-width="1.1"/><path d="M6 3.5v5" stroke="#111" stroke-width="1.1"/></svg><svg class="a" style="left:1820px;top:77px" width="16" height="16"><rect x="3" y="3" width="11" height="11" fill="#e8dcb0" stroke="#222" stroke-width=".8" transform="rotate(8 8 8)"/><rect x="1" y="1" width="11" height="11" fill="#f4f4f4" stroke="#222" stroke-width=".8"/><rect x="5" y="3" width="3" height="5" fill="#4a7ec8"/><circle cx="5" cy="9" r="2" fill="#ddd" stroke="#222" stroke-width=".6"/></svg><div class="t" style="left:1840px;top:80px;width:4px;overflow:hidden">R</div>
<svg class="a" style="left:1820px;top:97px" width="16" height="16"><circle cx="8" cy="8" r="7.5" fill="#9aa0b0"/><circle cx="8" cy="8" r="5.5" fill="#3c78b8" stroke="#222" stroke-width=".8"/><path d="M4 6Q6 3 8 5T11 9Q9 12 7 10Z" fill="#5aa040"/></svg><div class="t" style="left:1840px;top:100px;width:4px;overflow:hidden">W</div>
<svg class="a" style="left:1801px;top:119px" width="12" height="12"><circle cx="6" cy="6" r="4.6" fill="#d8d8d8" stroke="#222" stroke-width="1"/><path d="M3.5 6h5" stroke="#111" stroke-width="1.1"/><path d="M6 3.5v5" stroke="#111" stroke-width="1.1"/></svg><div class="a" style="left:1812px;top:125px;width:9px;height:1px;background:#3a3a3a"></div><svg class="a" style="left:1821px;top:118px" width="14" height="14"><path d="M2 2.5H12L7 12.5Z" fill="none" stroke="#e88a20" stroke-width="2"/><circle cx="2" cy="2.5" r="1.3" fill="#fff"/><circle cx="12" cy="2.5" r="1.3" fill="#fff"/><circle cx="7" cy="12.5" r="1.3" fill="#fff"/></svg><div class="t" style="left:1839px;top:120px;color:#111;width:5px;overflow:hidden">C</div><svg class="a" style="left:1847px;top:120px" width="16" height="10"><path d="M1 5Q8 -1.5 15 5Q8 11.5 1 5Z" fill="#f0f0f0" stroke="#222" stroke-width=".8"/><circle cx="8" cy="5" r="2.3" fill="#333"/></svg><svg class="a" style="left:1870px;top:117px" width="12" height="16"><path d="M1.5 1.5V13L4.5 10L7 15L9 14L6.5 9.5H10.5Z" fill="#f0f0f0" stroke="#111" stroke-width="1"/></svg><svg class="a" style="left:1887px;top:118px" width="16" height="14"><rect x="1" y="3" width="14" height="10" rx="1.5" fill="#dcdcdc" stroke="#222" stroke-width="1"/><rect x="3" y="1" width="4" height="2.5" fill="#ccc" stroke="#222" stroke-width=".8"/><circle cx="8.5" cy="8" r="3.2" fill="#333"/><circle cx="8.5" cy="8" r="1.6" fill="#b04040"/></svg>
<svg class="a" style="left:1801px;top:139px" width="12" height="12"><circle cx="6" cy="6" r="4.6" fill="#d8d8d8" stroke="#222" stroke-width="1"/><path d="M3.5 6h5" stroke="#111" stroke-width="1.1"/><path d="M6 3.5v5" stroke="#111" stroke-width="1.1"/></svg><div class="a" style="left:1812px;top:145px;width:9px;height:1px;background:#3a3a3a"></div><svg class="a" style="left:1821px;top:138px" width="14" height="14"><path d="M2 2.5H12L7 12.5Z" fill="none" stroke="#e88a20" stroke-width="2"/><circle cx="2" cy="2.5" r="1.3" fill="#fff"/><circle cx="12" cy="2.5" r="1.3" fill="#fff"/><circle cx="7" cy="12.5" r="1.3" fill="#fff"/></svg><div class="t" style="left:1839px;top:140px;color:#111;width:5px;overflow:hidden">C</div><svg class="a" style="left:1847px;top:140px" width="16" height="10"><path d="M1 5Q8 -1.5 15 5Q8 11.5 1 5Z" fill="#f0f0f0" stroke="#222" stroke-width=".8"/><circle cx="8" cy="5" r="2.3" fill="#333"/></svg><svg class="a" style="left:1870px;top:137px" width="12" height="16"><path d="M1.5 1.5V13L4.5 10L7 15L9 14L6.5 9.5H10.5Z" fill="#f0f0f0" stroke="#111" stroke-width="1"/></svg><svg class="a" style="left:1887px;top:138px" width="16" height="14"><rect x="1" y="3" width="14" height="10" rx="1.5" fill="#dcdcdc" stroke="#222" stroke-width="1"/><rect x="3" y="1" width="4" height="2.5" fill="#ccc" stroke="#222" stroke-width=".8"/><circle cx="8.5" cy="8" r="3.2" fill="#333"/><circle cx="8.5" cy="8" r="1.6" fill="#b04040"/></svg>
<svg class="a" style="left:1801px;top:159px" width="12" height="12"><circle cx="6" cy="6" r="4.6" fill="#d8d8d8" stroke="#222" stroke-width="1"/><path d="M3.5 6h5" stroke="#111" stroke-width="1.1"/><path d="M6 3.5v5" stroke="#111" stroke-width="1.1"/></svg><div class="a" style="left:1812px;top:165px;width:9px;height:1px;background:#3a3a3a"></div><svg class="a" style="left:1821px;top:158px" width="14" height="14"><path d="M2 2.5H12L7 12.5Z" fill="none" stroke="#e88a20" stroke-width="2"/><circle cx="2" cy="2.5" r="1.3" fill="#fff"/><circle cx="12" cy="2.5" r="1.3" fill="#fff"/><circle cx="7" cy="12.5" r="1.3" fill="#fff"/></svg><div class="t" style="left:1839px;top:160px;color:#111;width:5px;overflow:hidden">C</div><svg class="a" style="left:1847px;top:160px" width="16" height="10"><path d="M1 5Q8 -1.5 15 5Q8 11.5 1 5Z" fill="#f0f0f0" stroke="#222" stroke-width=".8"/><circle cx="8" cy="5" r="2.3" fill="#333"/></svg><svg class="a" style="left:1870px;top:157px" width="12" height="16"><path d="M1.5 1.5V13L4.5 10L7 15L9 14L6.5 9.5H10.5Z" fill="#f0f0f0" stroke="#111" stroke-width="1"/></svg><svg class="a" style="left:1887px;top:158px" width="16" height="14"><rect x="1" y="3" width="14" height="10" rx="1.5" fill="#dcdcdc" stroke="#222" stroke-width="1"/><rect x="3" y="1" width="4" height="2.5" fill="#ccc" stroke="#222" stroke-width=".8"/><circle cx="8.5" cy="8" r="3.2" fill="#333"/><circle cx="8.5" cy="8" r="1.6" fill="#b04040"/></svg>
<svg class="a" style="left:1801px;top:179px" width="12" height="12"><circle cx="6" cy="6" r="4.6" fill="#d8d8d8" stroke="#222" stroke-width="1"/><path d="M3.5 6h5" stroke="#111" stroke-width="1.1"/><path d="M6 3.5v5" stroke="#111" stroke-width="1.1"/></svg><div class="a" style="left:1812px;top:185px;width:9px;height:1px;background:#3a3a3a"></div><svg class="a" style="left:1821px;top:178px" width="14" height="14"><path d="M2 2.5H12L7 12.5Z" fill="none" stroke="#e88a20" stroke-width="2"/><circle cx="2" cy="2.5" r="1.3" fill="#fff"/><circle cx="12" cy="2.5" r="1.3" fill="#fff"/><circle cx="7" cy="12.5" r="1.3" fill="#fff"/></svg><div class="t" style="left:1839px;top:180px;color:#111;width:5px;overflow:hidden">C</div><svg class="a" style="left:1847px;top:180px" width="16" height="10"><path d="M1 5Q8 -1.5 15 5Q8 11.5 1 5Z" fill="#f0f0f0" stroke="#222" stroke-width=".8"/><circle cx="8" cy="5" r="2.3" fill="#333"/></svg><svg class="a" style="left:1870px;top:177px" width="12" height="16"><path d="M1.5 1.5V13L4.5 10L7 15L9 14L6.5 9.5H10.5Z" fill="#f0f0f0" stroke="#111" stroke-width="1"/></svg><svg class="a" style="left:1887px;top:178px" width="16" height="14"><rect x="1" y="3" width="14" height="10" rx="1.5" fill="#dcdcdc" stroke="#222" stroke-width="1"/><rect x="3" y="1" width="4" height="2.5" fill="#ccc" stroke="#222" stroke-width=".8"/><circle cx="8.5" cy="8" r="3.2" fill="#333"/><circle cx="8.5" cy="8" r="1.6" fill="#b04040"/></svg>
<svg class="a" style="left:1801px;top:199px" width="12" height="12"><circle cx="6" cy="6" r="4.6" fill="#d8d8d8" stroke="#222" stroke-width="1"/><path d="M3.5 6h5" stroke="#111" stroke-width="1.1"/><path d="M6 3.5v5" stroke="#111" stroke-width="1.1"/></svg><div class="a" style="left:1812px;top:205px;width:9px;height:1px;background:#3a3a3a"></div><svg class="a" style="left:1821px;top:198px" width="14" height="14"><path d="M2 2.5H12L7 12.5Z" fill="none" stroke="#e88a20" stroke-width="2"/><circle cx="2" cy="2.5" r="1.3" fill="#fff"/><circle cx="12" cy="2.5" r="1.3" fill="#fff"/><circle cx="7" cy="12.5" r="1.3" fill="#fff"/></svg><div class="t" style="left:1839px;top:200px;color:#111;width:5px;overflow:hidden">E</div><svg class="a" style="left:1847px;top:200px" width="16" height="10"><path d="M1 5Q8 -1.5 15 5Q8 11.5 1 5Z" fill="#f0f0f0" stroke="#222" stroke-width=".8"/><circle cx="8" cy="5" r="2.3" fill="#333"/></svg><svg class="a" style="left:1870px;top:197px" width="12" height="16"><path d="M1.5 1.5V13L4.5 10L7 15L9 14L6.5 9.5H10.5Z" fill="#f0f0f0" stroke="#111" stroke-width="1"/></svg><svg class="a" style="left:1887px;top:198px" width="16" height="14"><rect x="1" y="3" width="14" height="10" rx="1.5" fill="#dcdcdc" stroke="#222" stroke-width="1"/><rect x="3" y="1" width="4" height="2.5" fill="#ccc" stroke="#222" stroke-width=".8"/><circle cx="8.5" cy="8" r="3.2" fill="#333"/><circle cx="8.5" cy="8" r="1.6" fill="#b04040"/></svg>
<svg class="a" style="left:1801px;top:219px" width="12" height="12"><circle cx="6" cy="6" r="4.6" fill="#d8d8d8" stroke="#222" stroke-width="1"/><path d="M3.5 6h5" stroke="#111" stroke-width="1.1"/><path d="M6 3.5v5" stroke="#111" stroke-width="1.1"/></svg><div class="a" style="left:1812px;top:225px;width:9px;height:1px;background:#3a3a3a"></div><svg class="a" style="left:1821px;top:218px" width="14" height="14"><path d="M7 1.5V7.5L1.5 12M7 7.5L12.5 12" fill="none" stroke="#e88a20" stroke-width="2.2" stroke-linecap="round"/></svg><div class="t" style="left:1839px;top:220px;color:#111;width:5px;overflow:hidden">B</div><svg class="a" style="left:1847px;top:220px" width="16" height="10"><path d="M1 5Q8 -1.5 15 5Q8 11.5 1 5Z" fill="#f0f0f0" stroke="#222" stroke-width=".8"/><circle cx="8" cy="5" r="2.3" fill="#333"/></svg><svg class="a" style="left:1870px;top:217px" width="12" height="16"><path d="M1.5 1.5V13L4.5 10L7 15L9 14L6.5 9.5H10.5Z" fill="#f0f0f0" stroke="#111" stroke-width="1"/></svg><svg class="a" style="left:1887px;top:218px" width="16" height="14"><rect x="1" y="3" width="14" height="10" rx="1.5" fill="#dcdcdc" stroke="#222" stroke-width="1"/><rect x="3" y="1" width="4" height="2.5" fill="#ccc" stroke="#222" stroke-width=".8"/><circle cx="8.5" cy="8" r="3.2" fill="#333"/><circle cx="8.5" cy="8" r="1.6" fill="#b04040"/></svg>
<svg class="a" style="left:1801px;top:239px" width="12" height="12"><circle cx="6" cy="6" r="4.6" fill="#d8d8d8" stroke="#222" stroke-width="1"/><path d="M3.5 6h5" stroke="#111" stroke-width="1.1"/><path d="M6 3.5v5" stroke="#111" stroke-width="1.1"/></svg><div class="a" style="left:1812px;top:245px;width:9px;height:1px;background:#3a3a3a"></div><svg class="a" style="left:1821px;top:238px" width="14" height="14"><path d="M2 2.5H12L7 12.5Z" fill="none" stroke="#e88a20" stroke-width="2"/><circle cx="2" cy="2.5" r="1.3" fill="#fff"/><circle cx="12" cy="2.5" r="1.3" fill="#fff"/><circle cx="7" cy="12.5" r="1.3" fill="#fff"/></svg><div class="t" style="left:1839px;top:240px;color:#111;width:5px;overflow:hidden">C</div><svg class="a" style="left:1847px;top:240px" width="16" height="10"><path d="M1 5Q8 -1.5 15 5Q8 11.5 1 5Z" fill="#f0f0f0" stroke="#222" stroke-width=".8"/><circle cx="8" cy="5" r="2.3" fill="#333"/></svg><svg class="a" style="left:1870px;top:237px" width="12" height="16"><path d="M1.5 1.5V13L4.5 10L7 15L9 14L6.5 9.5H10.5Z" fill="#f0f0f0" stroke="#111" stroke-width="1"/></svg><svg class="a" style="left:1887px;top:238px" width="16" height="14"><rect x="1" y="3" width="14" height="10" rx="1.5" fill="#dcdcdc" stroke="#222" stroke-width="1"/><rect x="3" y="1" width="4" height="2.5" fill="#ccc" stroke="#222" stroke-width=".8"/><circle cx="8.5" cy="8" r="3.2" fill="#333"/><circle cx="8.5" cy="8" r="1.6" fill="#b04040"/></svg>
<svg class="a" style="left:1801px;top:259px" width="12" height="12"><circle cx="6" cy="6" r="4.6" fill="#d8d8d8" stroke="#222" stroke-width="1"/><path d="M3.5 6h5" stroke="#111" stroke-width="1.1"/></svg><div class="a" style="left:1812px;top:265px;width:9px;height:1px;background:#3a3a3a"></div><svg class="a" style="left:1821px;top:258px" width="14" height="14"><path d="M7 1.5V7.5L1.5 12M7 7.5L12.5 12" fill="none" stroke="#e88a20" stroke-width="2.2" stroke-linecap="round"/></svg><div class="t" style="left:1839px;top:260px;color:#111;width:5px;overflow:hidden">H</div><svg class="a" style="left:1847px;top:260px" width="16" height="10"><path d="M1 5Q8 -1.5 15 5Q8 11.5 1 5Z" fill="#f0f0f0" stroke="#222" stroke-width=".8"/><circle cx="8" cy="5" r="2.3" fill="#333"/></svg><svg class="a" style="left:1870px;top:257px" width="12" height="16"><path d="M1.5 1.5V13L4.5 10L7 15L9 14L6.5 9.5H10.5Z" fill="#f0f0f0" stroke="#111" stroke-width="1"/></svg><svg class="a" style="left:1887px;top:258px" width="16" height="14"><rect x="1" y="3" width="14" height="10" rx="1.5" fill="#dcdcdc" stroke="#222" stroke-width="1"/><rect x="3" y="1" width="4" height="2.5" fill="#ccc" stroke="#222" stroke-width=".8"/><circle cx="8.5" cy="8" r="3.2" fill="#333"/><circle cx="8.5" cy="8" r="1.6" fill="#b04040"/></svg>
<svg class="a" style="left:1821px;top:279px" width="12" height="12"><circle cx="6" cy="6" r="4.6" fill="#d8d8d8" stroke="#222" stroke-width="1"/><path d="M3.5 6h5" stroke="#111" stroke-width="1.1"/><path d="M6 3.5v5" stroke="#111" stroke-width="1.1"/></svg><div class="a" style="left:1832px;top:285px;width:12px;height:1px;background:#3a3a3a"></div><div class="a" style="left:1839px;top:277px;width:5px;height:6px;background:#e8a040;border-radius:2px"></div><svg class="a" style="left:1847px;top:280px" width="16" height="10"><path d="M1 5Q8 -1.5 15 5Q8 11.5 1 5Z" fill="#f0f0f0" stroke="#222" stroke-width=".8"/><circle cx="8" cy="5" r="2.3" fill="#333"/></svg><svg class="a" style="left:1870px;top:277px" width="12" height="16"><path d="M1.5 1.5V13L4.5 10L7 15L9 14L6.5 9.5H10.5Z" fill="#f0f0f0" stroke="#111" stroke-width="1"/></svg><svg class="a" style="left:1887px;top:278px" width="16" height="14"><rect x="1" y="3" width="14" height="10" rx="1.5" fill="#dcdcdc" stroke="#222" stroke-width="1"/><rect x="3" y="1" width="4" height="2.5" fill="#ccc" stroke="#222" stroke-width=".8"/><circle cx="8.5" cy="8" r="3.2" fill="#333"/><circle cx="8.5" cy="8" r="1.6" fill="#b04040"/></svg>
<svg class="a" style="left:1821px;top:299px" width="12" height="12"><circle cx="6" cy="6" r="4.6" fill="#d8d8d8" stroke="#222" stroke-width="1"/><path d="M3.5 6h5" stroke="#111" stroke-width="1.1"/><path d="M6 3.5v5" stroke="#111" stroke-width="1.1"/></svg><div class="a" style="left:1832px;top:305px;width:12px;height:1px;background:#3a3a3a"></div><div class="a" style="left:1839px;top:297px;width:5px;height:6px;background:#e8a040;border-radius:2px"></div><div class="a" style="left:1835px;top:299px;width:12px;height:14px;background:#9a7a50;border-radius:7px;opacity:.7"></div><svg class="a" style="left:1847px;top:300px" width="16" height="10"><path d="M1 5Q8 -1.5 15 5Q8 11.5 1 5Z" fill="#f0f0f0" stroke="#222" stroke-width=".8"/><circle cx="8" cy="5" r="2.3" fill="#333"/></svg><svg class="a" style="left:1870px;top:297px" width="12" height="16"><path d="M1.5 1.5V13L4.5 10L7 15L9 14L6.5 9.5H10.5Z" fill="#f0f0f0" stroke="#111" stroke-width="1"/></svg><svg class="a" style="left:1887px;top:298px" width="16" height="14"><rect x="1" y="3" width="14" height="10" rx="1.5" fill="#dcdcdc" stroke="#222" stroke-width="1"/><rect x="3" y="1" width="4" height="2.5" fill="#ccc" stroke="#222" stroke-width=".8"/><circle cx="8.5" cy="8" r="3.2" fill="#333"/><circle cx="8.5" cy="8" r="1.6" fill="#b04040"/></svg>
<svg class="a" style="left:1801px;top:319px" width="12" height="12"><circle cx="6" cy="6" r="4.6" fill="#d8d8d8" stroke="#222" stroke-width="1"/><path d="M3.5 6h5" stroke="#111" stroke-width="1.1"/><path d="M6 3.5v5" stroke="#111" stroke-width="1.1"/></svg><div class="a" style="left:1812px;top:325px;width:9px;height:1px;background:#3a3a3a"></div><svg class="a" style="left:1821px;top:318px" width="14" height="14"><path d="M2 2.5H12L7 12.5Z" fill="none" stroke="#e88a20" stroke-width="2"/><circle cx="2" cy="2.5" r="1.3" fill="#fff"/><circle cx="12" cy="2.5" r="1.3" fill="#fff"/><circle cx="7" cy="12.5" r="1.3" fill="#fff"/></svg><div class="t" style="left:1839px;top:320px;color:#111;width:5px;overflow:hidden">R</div><svg class="a" style="left:1847px;top:320px" width="16" height="10"><path d="M1 5Q8 -1.5 15 5Q8 11.5 1 5Z" fill="#f0f0f0" stroke="#222" stroke-width=".8"/><circle cx="8" cy="5" r="2.3" fill="#333"/></svg><svg class="a" style="left:1870px;top:317px" width="12" height="16"><path d="M1.5 1.5V13L4.5 10L7 15L9 14L6.5 9.5H10.5Z" fill="#f0f0f0" stroke="#111" stroke-width="1"/></svg><svg class="a" style="left:1887px;top:318px" width="16" height="14"><rect x="1" y="3" width="14" height="10" rx="1.5" fill="#dcdcdc" stroke="#222" stroke-width="1"/><rect x="3" y="1" width="4" height="2.5" fill="#ccc" stroke="#222" stroke-width=".8"/><circle cx="8.5" cy="8" r="3.2" fill="#333"/><circle cx="8.5" cy="8" r="1.6" fill="#b04040"/></svg>
<div class="a" style="left:1844px;top:75px;width:1px;height:314px;background:#5e5e5e"></div>
<div class="a" style="left:1777px;top:389px;width:122px;height:17px;background:#6e6e6e"></div>
<div class="a" style="left:1781px;top:391px;width:118px;height:12px;border-radius:6px;background:#5e5e5e"></div>
<div class="a" style="left:1781px;top:391px;width:45px;height:12px;border-radius:6px;background:linear-gradient(#9a9a9a,#808080);border:1px solid #5a5a5a"></div>
<svg class="a" style="left:1777px;top:394px" width="12" height="12"><path d="M0 1L11 12M0 5L7 12M0 9L3 12" stroke="#c0c0c0"/><path d="M0 2L10 12M0 6L6 12" stroke="#333"/></svg>

<div class="a" style="left:1777px;top:406px;width:122px;height:1px;background:#000"></div>

<!-- ============ PROPERTIES ============ -->
<div class="a" style="left:1777px;top:407px;width:122px;height:609px;background:#727272"></div>
<div class="a" style="left:1777px;top:407px;width:122px;height:27px;background:#727272"></div>
<div class="a" style="left:1777px;top:434px;width:122px;height:1px;background:#666"></div>
<svg class="a" style="left:1889px;top:407px" width="10" height="10"><path d="M1 0L10 9M5 0L10 5" stroke="#c0c0c0"/><path d="M2 0L10 8M6 0L10 4" stroke="#333"/></svg>
<div class="m" style="left:1786px;top:411px;width:31px;height:20px;border-radius:5px"></div>
<svg class="a" style="left:1789px;top:414px" width="14" height="14"><rect x="1" y="1.5" width="12" height="4" rx="2" fill="#eee"/><rect x="1" y="8" width="12" height="4.5" rx="2" fill="none" stroke="#eee" stroke-width="1.5"/><rect x="7" y="2" width="5" height="3" fill="#555"/></svg><div class="ud" style="left:1806px;top:415px"></div>
<div class="m" style="left:1826px;top:411px;width:80px;height:20px;border-radius:5px;background:linear-gradient(#5a5a5a,#424242)"></div>
<div class="a" style="left:1846px;top:412px;width:1px;height:18px;background:#222"></div><div class="a" style="left:1866px;top:412px;width:1px;height:18px;background:#222"></div><div class="a" style="left:1886px;top:412px;width:1px;height:18px;background:#222"></div><svg class="a" style="left:1829px;top:413px" width="16" height="15"><rect x="1" y="4" width="14" height="10" rx="1.5" fill="#d8d8d8" stroke="#222" stroke-width=".8"/><rect x="3" y="2" width="4" height="2.5" fill="#ccc" stroke="#222" stroke-width=".6"/><circle cx="8.5" cy="9" r="3.2" fill="#333"/><circle cx="8.5" cy="9" r="1.6" fill="#b04040"/></svg><svg class="a" style="left:1849px;top:413px" width="16" height="16"><rect x="3" y="3" width="11" height="11" fill="#e8dcb0" stroke="#222" stroke-width=".8" transform="rotate(8 8 8)"/><rect x="1" y="1" width="11" height="11" fill="#f4f4f4" stroke="#222" stroke-width=".8"/><rect x="5" y="3" width="3" height="5" fill="#4a7ec8"/><circle cx="5" cy="9" r="2" fill="#ddd" stroke="#222" stroke-width=".6"/></svg><svg class="a" style="left:1868px;top:413px" width="16" height="16"><circle cx="4" cy="3" r="1.6" fill="#e8e060"/><rect x="8" y="2" width="5.5" height="9" rx="2.5" fill="#4a7ec8" stroke="#1b2b44" stroke-width=".7"/><circle cx="6" cy="11" r="3.6" fill="#d0d0d0" stroke="#222" stroke-width=".7"/></svg><svg class="a" style="left:1888px;top:413px" width="16" height="16"><circle cx="8" cy="8" r="7" fill="#3c78b8" stroke="#222" stroke-width=".8"/><path d="M4 6Q6 3 8 5T11 9Q9 12 7 10Z" fill="#5aa040"/></svg>
<svg class="a" style="left:1783px;top:444px" width="16" height="16"><path d="M2 15L7 9" stroke="#eee" stroke-width="1.6"/><path d="M6 6L10 2L14 6L10 10Z" fill="#e8e8e8" stroke="#222" stroke-width=".8"/><path d="M4 8L8 12" stroke="#222" stroke-width="2.5"/><path d="M4.5 8L8 11.5" stroke="#ddd" stroke-width="1.4"/></svg>
<svg class="a" style="left:1801px;top:444px" width="20" height="16"><circle cx="4" cy="3" r="1.6" fill="#e8e060"/><rect x="8" y="2" width="5.5" height="9" rx="2.5" fill="#4a7ec8" stroke="#1b2b44" stroke-width=".7"/><circle cx="6" cy="11" r="3.6" fill="#e0e0e0" stroke="#222" stroke-width=".7"/><path d="M16 5L19 8L16 11Z" fill="#333"/></svg>
<svg class="a" style="left:1829px;top:445px" width="14" height="14"><path d="M7 1L13 4V10.5L7 13.5L1 10.5V4Z" fill="#e8902a" stroke="#3a2000" stroke-width=".8"/><path d="M1 4L7 7L13 4M7 7V13.5" stroke="#6a3a08" stroke-width=".8" fill="none"/><path d="M1.5 4.2L7 1.3L12.5 4.2L7 6.8Z" fill="#f8c070"/></svg>
<div class="a" style="left:1858px;top:448px;border-top:3.5px solid transparent;border-bottom:3.5px solid transparent;border-left:4px solid #333"></div>
<svg class="a" style="left:1870px;top:445px" width="15" height="15"><circle cx="7.5" cy="7.5" r="6.5" fill="#ddd" stroke="#222" stroke-width=".8"/><path d="M7.5 1A6.5 6.5 0 0 1 14 7.5H7.5Z" fill="#444"/><path d="M1 7.5A6.5 6.5 0 0 0 7.5 14V7.5Z" fill="#c05a4a"/></svg>
<div class="a" style="left:1785px;top:478px;width:83px;height:60px;border:1px solid #3a3a3a;border-radius:4px;background:#7e7e7e"></div>
<div class="a" style="left:1791px;top:484px;width:71px;height:18px;background:#5680c2"></div>
<div class="a" style="left:1793px;top:486px;width:14px;height:14px;border-radius:7px;background:#f8f8f8"></div>
<div class="t" style="left:1813px;top:488px;color:#fff">Wheels</div>
<svg class="a" style="left:1793px;top:521px" width="12" height="12"><circle cx="6" cy="6" r="4.5" fill="none" stroke="#555" stroke-width="1"/><path d="M3.5 6h5M6 3.5v5" stroke="#555"/></svg>
<div class="a" style="left:1829px;top:525px;width:14px;height:1px;background:#222"></div><div class="a" style="left:1829px;top:528px;width:14px;height:1px;background:#222"></div>
<div class="a" style="left:1876px;top:478px;width:20px;height:60px;border:1px solid #1c1c1c;border-radius:4px;background:#3e3e3e;overflow:hidden"><div class="a" style="left:0;top:0;width:18px;height:19px;background:linear-gradient(#acacac,#8e8e8e);border-bottom:1px solid #333"></div><div class="a" style="left:0;top:19px;width:18px;height:20px;background:linear-gradient(#acacac,#8e8e8e);border-bottom:1px solid #333"></div></div>
<svg class="a" style="left:1879px;top:481px" width="14" height="14"><path d="M7 1.5v11M1.5 7h11" stroke="#111" stroke-width="3.4"/><path d="M7 2.5v9M2.5 7h9" stroke="#fff" stroke-width="1.6"/></svg>
<svg class="a" style="left:1879px;top:501px" width="14" height="14"><path d="M1.5 7h11" stroke="#111" stroke-width="3.4"/><path d="M2.5 7h9" stroke="#fff" stroke-width="1.6"/></svg>
<svg class="a" style="left:1880px;top:522px" width="12" height="12"><path d="M1 2H11L6 11Z" fill="#111"/><path d="M9 4L6 10" stroke="#ddd" stroke-width="1"/></svg>
<div class="m" style="left:1785px;top:543px;width:66px;height:20px;border-radius:5px;background:linear-gradient(#4e4e4e,#383838)"></div>
<div class="a" style="left:1801px;top:544px;width:25px;height:18px;background:linear-gradient(#b0b0b0,#a0a0a0)"></div>
<div class="a" style="left:1826px;top:544px;width:24px;height:18px;background:linear-gradient(#9a9a9a,#8a8a8a);border-left:1px solid #555;border-radius:0 4px 4px 0"></div>
<svg class="a" style="left:1787px;top:546px" width="15" height="15"><circle cx="7.5" cy="7.5" r="6.5" fill="#ddd" stroke="#222" stroke-width=".8"/><path d="M7.5 1A6.5 6.5 0 0 1 14 7.5H7.5Z" fill="#444"/><path d="M1 7.5A6.5 6.5 0 0 0 7.5 14V7.5Z" fill="#c05a4a"/></svg>
<div class="t" style="left:1806px;top:549px">W</div><div class="t" style="left:1821px;top:549px">F</div><div class="a" style="left:1818px;top:544px;width:1px;height:18px;background:#555"></div>
<svg class="a" style="left:1826px;top:546px" width="14" height="14"><path d="M7 1.5v11M1.5 7h11" stroke="#111" stroke-width="3.4"/><path d="M7 2.5v9M2.5 7h9" stroke="#fff" stroke-width="1.6"/></svg>
<svg class="a" style="left:1837px;top:546px" width="14" height="14"><path d="M2 2L12 12M12 2L2 12" stroke="#111" stroke-width="3.4"/><path d="M2.5 2.5L11.5 11.5M11.5 2.5L2.5 11.5" stroke="#fff" stroke-width="1.6"/></svg>
<div class="m" style="left:1859px;top:543px;width:37px;height:20px;border-radius:5px;padding-left:4px">Dat</div><div class="ud" style="left:1886px;top:547px"></div>
<div class="sep" style="left:1782px;top:570px;width:117px"></div>
<div class="trr" style="left:1788px;top:578.5px"></div><div class="t" style="left:1802px;top:577px;font-size:12px;line-height:12px;color:#111">Custom Properties</div><div class="grip" style="left:1880px;top:582px"></div>
<div class="sep" style="left:1782px;top:594px;width:117px"></div>
<div class="trr" style="left:1788px;top:602.5px"></div><div class="t" style="left:1802px;top:601px;font-size:12px;line-height:12px;color:#111">Preview</div><div class="grip" style="left:1880px;top:606px"></div>
<div class="sep" style="left:1782px;top:618px;width:117px"></div>
<div class="tri" style="left:1787px;top:627px"></div><div class="t" style="left:1802px;top:625px;font-size:12px;line-height:12px;color:#111">Surface</div><div class="grip" style="left:1880px;top:630px"></div>
<div class="b" style="left:1785px;top:651px;width:111px;height:20px;text-align:center;padding-left:14px">Use Nodes</div>
<svg class="a" style="left:1789px;top:653px" width="16" height="17"><path d="M8 4Q13 4 13 8.5Q13 13 8 13" stroke="#8ab0e0" stroke-width="1.4" fill="none"/><rect x="3" y="1" width="7" height="6" fill="#f0f0f0" stroke="#222" stroke-width=".8"/><rect x="1" y="9.5" width="7" height="6" fill="#f0f0f0" stroke="#222" stroke-width=".8"/><circle cx="11" cy="4" r="1.3" fill="#f0a020"/><circle cx="9" cy="12.5" r="1.3" fill="#f0a020"/></svg>
<div class="t" style="left:1792px;top:682px">Diffuse C</div>
<div class="a" style="left:1841px;top:677px;width:55px;height:19px;border:1px solid #222;border-radius:4px;background:#e6e6e6"></div>
<div class="sep" style="left:1782px;top:703px;width:117px"></div>
<div class="trr" style="left:1788px;top:711.5px"></div><div class="t" style="left:1802px;top:710px;font-size:12px;line-height:12px;color:#111">Settings</div><div class="grip" style="left:1880px;top:715px"></div>


<!-- ============ 3D HEADER ============ -->
<div class="a" style="left:0;top:892px;width:1776px;height:26px;background:#727272;border-top:1px solid #7c7c7c"></div>
<div class="a" style="left:0;top:918px;width:1776px;height:1px;background:#000"></div>
<svg class="a" style="left:0;top:904px" width="14" height="14"><path d="M0 3L11 14M0 7L7 14M0 11L3 14" stroke="#b0b0b0"/><path d="M0 4L10 14M0 8L6 14" stroke="#222"/></svg>
<div class="m" style="left:9px;top:895px;width:32px;height:20px;border-radius:5px"></div>
<svg class="a" style="left:13px;top:898px" width="15" height="15"><path d="M7.5 1L13.5 3.5V11.5L7.5 14L1.5 11.5V3.5Z" fill="#e8e8e8" stroke="#111" stroke-width=".8"/><path d="M1.5 3.5L7.5 6L13.5 3.5M7.5 6V14" stroke="#555" fill="none" stroke-width=".8"/><path d="M7.5 6L13.5 3.5V11.5L7.5 14Z" fill="#b8b8b8"/></svg><div class="ud" style="left:31px;top:899px"></div>
<div class="t" style="left:53px;top:901px">View</div><div class="t" style="left:98px;top:901px">Select</div><div class="t" style="left:149px;top:901px">Add</div><div class="t" style="left:188px;top:901px">Object</div>
<div class="m" style="left:234px;top:895px;width:113px;height:20px;border-radius:5px"></div>
<svg class="a" style="left:239px;top:898px" width="14" height="14"><path d="M7 1L13 4V10.5L7 13.5L1 10.5V4Z" fill="#e8902a" stroke="#3a2000" stroke-width=".8"/><path d="M1 4L7 7L13 4M7 7V13.5" stroke="#6a3a08" stroke-width=".8" fill="none"/><path d="M1.5 4.2L7 1.3L12.5 4.2L7 6.8Z" fill="#f8c070"/></svg>
<div class="t w" style="left:258px;top:901px">Object Mode</div><div class="ud" style="left:337px;top:899px"></div>
<div class="m" style="left:352px;top:895px;width:32px;height:20px;border-radius:5px"></div>
<svg class="a" style="left:356px;top:898px" width="14" height="14"><defs><radialGradient id="sph" cx="35%" cy="30%"><stop offset="0" stop-color="#fff"/><stop offset=".5" stop-color="#c08070"/><stop offset="1" stop-color="#402020"/></radialGradient></defs><circle cx="7" cy="7" r="6" fill="url(#sph)"/></svg><div class="ud" style="left:374px;top:899px"></div>
<div class="m" style="left:389px;top:895px;width:52px;height:20px;border-radius:5px"></div>
<div class="a" style="left:421px;top:896px;width:19px;height:18px;background:linear-gradient(#a8a8a8,#8c8c8c);border-left:1px solid #333;border-radius:0 4px 4px 0"></div>
<svg class="a" style="left:393px;top:898px" width="14" height="14"><circle cx="4.5" cy="4.5" r="3.5" fill="#ddd" stroke="#222" stroke-width=".7"/><circle cx="9.5" cy="9.5" r="3.5" fill="#ddd" stroke="#222" stroke-width=".7"/><rect x="5" y="5" width="4" height="4" fill="none" stroke="#3a70d0" stroke-width="1.2"/></svg><div class="ud" style="left:411px;top:899px"></div>
<svg class="a" style="left:423px;top:897px" width="16" height="16"><circle cx="3.5" cy="3" r="1.5" fill="none" stroke="#fff" stroke-width="1"/><circle cx="8" cy="3" r="1.5" fill="none" stroke="#fff"/><circle cx="12.5" cy="3" r="1.5" fill="none" stroke="#fff"/><path d="M2 10H14M2 10L5 7.5M2 10L5 12.5M14 10L11 7.5M14 10L11 12.5" stroke="#111" stroke-width="2.4"/><path d="M2 10H14M2 10L5 7.5M2 10L5 12.5M14 10L11 7.5M14 10L11 12.5" stroke="#fff" stroke-width="1"/></svg>
<div class="m" style="left:446px;top:895px;width:152px;height:20px;border-radius:5px"></div>
<div class="a" style="left:465px;top:896px;width:20px;height:18px;background:linear-gradient(#6a98d8,#4e78b8)"></div>
<div class="a" style="left:465px;top:896px;width:1px;height:18px;background:#222"></div><div class="a" style="left:485px;top:896px;width:1px;height:18px;background:#222"></div><div class="a" style="left:505px;top:896px;width:1px;height:18px;background:#222"></div><div class="a" style="left:525px;top:896px;width:1px;height:18px;background:#222"></div>
<svg class="a" style="left:449px;top:897px" width="16" height="16"><path d="M8 9V2" stroke="#3a70e0" stroke-width="2"/><path d="M8 9L2 14" stroke="#e03030" stroke-width="2"/><path d="M8 9L14 14" stroke="#40c040" stroke-width="2"/><circle cx="8" cy="9" r="1.3" fill="#fff"/></svg>
<svg class="a" style="left:467px;top:897px" width="16" height="16"><path d="M3 13L12 4" stroke="#111" stroke-width="3"/><path d="M3 13L12 4" stroke="#9ac0f0" stroke-width="1.5"/><path d="M8 3H13V8Z" fill="#9ac0f0" stroke="#111" stroke-width=".8"/></svg>
<svg class="a" style="left:487px;top:897px" width="16" height="16"><path d="M3 14Q4 5 13 3" stroke="#3a70c0" stroke-width="2.2" fill="none"/></svg>
<svg class="a" style="left:507px;top:897px" width="16" height="16"><path d="M3 13L10 6" stroke="#4a78c0" stroke-width="2"/><rect x="9" y="3" width="5" height="5" fill="#4a78c0"/></svg>
<div class="t w" style="left:533px;top:901px">Global</div><div class="ud" style="left:587px;top:899px"></div>
<div class="a" style="left:603px;top:895px;width:50px;height:20px;border:1px solid #1c1c1c;border-radius:4px;background:#8a8a8a;overflow:hidden"><div class="a" style="left:9px;top:0;width:1px;height:18px;background:#555"></div><div class="a" style="left:19px;top:0;width:1px;height:18px;background:#555"></div><div class="a" style="left:29px;top:0;width:1px;height:18px;background:#555"></div><div class="a" style="left:39px;top:0;width:1px;height:18px;background:#555"></div><div class="a" style="left:0;top:9px;width:48px;height:1px;background:#555"></div></div><div class="a" style="left:658px;top:895px;width:50px;height:20px;border:1px solid #1c1c1c;border-radius:4px;background:#8a8a8a;overflow:hidden"><div class="a" style="left:9px;top:0;width:1px;height:18px;background:#555"></div><div class="a" style="left:19px;top:0;width:1px;height:18px;background:#555"></div><div class="a" style="left:29px;top:0;width:1px;height:18px;background:#555"></div><div class="a" style="left:39px;top:0;width:1px;height:18px;background:#555"></div><div class="a" style="left:0;top:9px;width:48px;height:1px;background:#555"></div></div><div class="a" style="left:606px;top:898px;width:5px;height:5px;border-radius:3px;background:#f0a030;border:1px solid #333"></div>
<div class="b" style="left:713px;top:895px;width:20px;height:20px;border-radius:5px"></div><div class="b" style="left:738px;top:895px;width:20px;height:20px;border-radius:5px"></div><div class="b" style="left:763px;top:895px;width:72px;height:20px;border-radius:5px"></div><div class="b" style="left:840px;top:895px;width:40px;height:20px;border-radius:5px"></div><div class="b" style="left:885px;top:895px;width:20px;height:20px;border-radius:5px"></div><div class="b" style="left:910px;top:895px;width:102px;height:20px;border-radius:5px"></div>
<div class="a" style="left:782px;top:896px;width:32px;height:18px;background:linear-gradient(#4e4e4e,#383838)"></div>
<div class="a" style="left:859px;top:896px;width:1px;height:18px;background:#333"></div>
<svg class="a" style="left:716px;top:897px" width="16" height="16"><rect x="2" y="3" width="9" height="9" fill="#e0e0e0" stroke="#222" stroke-width=".8"/><path d="M11 8a2 2.5 0 1 1 0 5a2 2.5 0 1 1 0-5" stroke="#222" stroke-width="1.5" fill="none"/></svg>
<svg class="a" style="left:741px;top:898px" width="14" height="14"><circle cx="7" cy="7" r="5.5" fill="none" stroke="#aaa" stroke-width="1.5"/><circle cx="7" cy="7" r="2.5" fill="none" stroke="#aaa" stroke-width="1.2"/></svg>
<svg class="a" style="left:766px;top:897px" width="16" height="16"><path d="M4 13L10 7A2.5 2.5 0 0 0 6.5 3.5L2 8" stroke="#ddd" stroke-width="2.5" fill="none"/><path d="M4 13L10 7A2.5 2.5 0 0 0 6.5 3.5L2 8" stroke="#222" stroke-width=".6" fill="none"/></svg>
<svg class="a" style="left:785px;top:898px" width="16" height="14"><path d="M1 7H15M4 3V11M12 3V11" stroke="#fff" stroke-width="1.2"/><rect x="7" y="2" width="2.5" height="10" rx="1.2" fill="#4a90e0"/></svg><div class="ud" style="left:804px;top:899px"></div>
<svg class="a" style="left:816px;top:897px" width="16" height="16"><path d="M5 6V15M10 6V15M2 9H15M2 13H15" stroke="#222" stroke-width="1"/><circle cx="5" cy="4.5" r="3" fill="#3a80e0" stroke="#fff" stroke-width="1"/></svg>
<svg class="a" style="left:842px;top:897px" width="17" height="16"><rect x="1" y="5" width="14" height="10" rx="1.5" fill="#d8d8d8" stroke="#222" stroke-width=".8"/><circle cx="8" cy="10" r="3.2" fill="#333"/><circle cx="8" cy="10" r="1.5" fill="#b04040"/><path d="M13 1L14 3.5L16.5 4L14 4.8L13 7.5L12 4.8L9.5 4L12 3.5Z" fill="#f0d040"/></svg>
<svg class="a" style="left:862px;top:897px" width="16" height="16"><rect x="2" y="7" width="13" height="8" fill="#444" stroke="#111" stroke-width=".8"/><path d="M2 4L14 1.5V5L2 7.5Z" fill="#eee" stroke="#111" stroke-width=".8"/><path d="M3 10H14" stroke="#aaa"/><path d="M1.5 9L5 4.5L5 9Z" fill="#5a90e0"/></svg>
<svg class="a" style="left:888px;top:898px" width="14" height="14"><rect x="2.5" y="1.5" width="3" height="11" fill="#eee" stroke="#111" stroke-width="1"/><rect x="8.5" y="1.5" width="3" height="11" fill="#eee" stroke="#111" stroke-width="1"/></svg>
<svg class="a" style="left:913px;top:897px" width="16" height="16"><rect x="3" y="3" width="11" height="11" fill="#e8dcb0" stroke="#222" stroke-width=".8" transform="rotate(8 8 8)"/><rect x="1" y="1" width="11" height="11" fill="#f4f4f4" stroke="#222" stroke-width=".8"/><rect x="5" y="3" width="3" height="5" fill="#4a7ec8"/><circle cx="5" cy="9" r="2" fill="#ddd" stroke="#222" stroke-width=".6"/></svg>
<div class="t" style="left:937px;top:901px">RenderLayer</div>


<!-- ============ TIMELINE ============ -->
<div class="a" style="left:0;top:919px;width:1776px;height:94px;background:#727272"></div>
<div class="a" style="left:0;top:919px;width:301px;height:50px;background:#434343"></div>
<div class="a" style="left:301px;top:919px;width:2px;height:50px;background:#2e2e2e"></div>
<div class="a" style="left:303px;top:919px;width:4px;height:50px;background:#4a4a4a"></div>
<div class="a" style="left:1603px;top:919px;width:173px;height:50px;background:#434343"></div>
<div class="a" style="left:15px;top:919px;width:1px;height:50px;background:#4c4c4c"></div><div class="a" style="left:41px;top:919px;width:1px;height:50px;background:#393939"></div><div class="a" style="left:67px;top:919px;width:1px;height:50px;background:#4c4c4c"></div><div class="a" style="left:93px;top:919px;width:1px;height:50px;background:#393939"></div><div class="a" style="left:119px;top:919px;width:1px;height:50px;background:#4c4c4c"></div><div class="a" style="left:145px;top:919px;width:1px;height:50px;background:#393939"></div><div class="a" style="left:171px;top:919px;width:1px;height:50px;background:#4c4c4c"></div><div class="a" style="left:197px;top:919px;width:1px;height:50px;background:#393939"></div><div class="a" style="left:223px;top:919px;width:1px;height:50px;background:#4c4c4c"></div><div class="a" style="left:249px;top:919px;width:1px;height:50px;background:#393939"></div><div class="a" style="left:275px;top:919px;width:1px;height:50px;background:#4c4c4c"></div><div class="a" style="left:327px;top:919px;width:1px;height:50px;background:#686868"></div><div class="a" style="left:353px;top:919px;width:1px;height:50px;background:#5a5a5a"></div><div class="a" style="left:379px;top:919px;width:1px;height:50px;background:#686868"></div><div class="a" style="left:405px;top:919px;width:1px;height:50px;background:#5a5a5a"></div><div class="a" style="left:432px;top:919px;width:1px;height:50px;background:#686868"></div><div class="a" style="left:458px;top:919px;width:1px;height:50px;background:#5a5a5a"></div><div class="a" style="left:484px;top:919px;width:1px;height:50px;background:#686868"></div><div class="a" style="left:510px;top:919px;width:1px;height:50px;background:#5a5a5a"></div><div class="a" style="left:536px;top:919px;width:1px;height:50px;background:#686868"></div><div class="a" style="left:562px;top:919px;width:1px;height:50px;background:#5a5a5a"></div><div class="a" style="left:588px;top:919px;width:1px;height:50px;background:#686868"></div><div class="a" style="left:614px;top:919px;width:1px;height:50px;background:#5a5a5a"></div><div class="a" style="left:640px;top:919px;width:1px;height:50px;background:#686868"></div><div class="a" style="left:666px;top:919px;width:1px;height:50px;background:#5a5a5a"></div><div class="a" style="left:692px;top:919px;width:1px;height:50px;background:#686868"></div><div class="a" style="left:718px;top:919px;width:1px;height:50px;background:#5a5a5a"></div><div class="a" style="left:744px;top:919px;width:1px;height:50px;background:#686868"></div><div class="a" style="left:770px;top:919px;width:1px;height:50px;background:#5a5a5a"></div><div class="a" style="left:796px;top:919px;width:1px;height:50px;background:#686868"></div><div class="a" style="left:822px;top:919px;width:1px;height:50px;background:#5a5a5a"></div><div class="a" style="left:848px;top:919px;width:1px;height:50px;background:#686868"></div><div class="a" style="left:874px;top:919px;width:1px;height:50px;background:#5a5a5a"></div><div class="a" style="left:900px;top:919px;width:1px;height:50px;background:#686868"></div><div class="a" style="left:926px;top:919px;width:1px;height:50px;background:#5a5a5a"></div><div class="a" style="left:952px;top:919px;width:1px;height:50px;background:#686868"></div><div class="a" style="left:978px;top:919px;width:1px;height:50px;background:#5a5a5a"></div><div class="a" style="left:1004px;top:919px;width:1px;height:50px;background:#686868"></div><div class="a" style="left:1030px;top:919px;width:1px;height:50px;background:#5a5a5a"></div><div class="a" style="left:1056px;top:919px;width:1px;height:50px;background:#686868"></div><div class="a" style="left:1082px;top:919px;width:1px;height:50px;background:#5a5a5a"></div><div class="a" style="left:1109px;top:919px;width:1px;height:50px;background:#686868"></div><div class="a" style="left:1135px;top:919px;width:1px;height:50px;background:#5a5a5a"></div><div class="a" style="left:1161px;top:919px;width:1px;height:50px;background:#686868"></div><div class="a" style="left:1187px;top:919px;width:1px;height:50px;background:#5a5a5a"></div><div class="a" style="left:1213px;top:919px;width:1px;height:50px;background:#686868"></div><div class="a" style="left:1239px;top:919px;width:1px;height:50px;background:#5a5a5a"></div><div class="a" style="left:1265px;top:919px;width:1px;height:50px;background:#686868"></div><div class="a" style="left:1291px;top:919px;width:1px;height:50px;background:#5a5a5a"></div><div class="a" style="left:1317px;top:919px;width:1px;height:50px;background:#686868"></div><div class="a" style="left:1343px;top:919px;width:1px;height:50px;background:#5a5a5a"></div><div class="a" style="left:1369px;top:919px;width:1px;height:50px;background:#686868"></div><div class="a" style="left:1395px;top:919px;width:1px;height:50px;background:#5a5a5a"></div><div class="a" style="left:1421px;top:919px;width:1px;height:50px;background:#686868"></div><div class="a" style="left:1447px;top:919px;width:1px;height:50px;background:#5a5a5a"></div><div class="a" style="left:1473px;top:919px;width:1px;height:50px;background:#686868"></div><div class="a" style="left:1499px;top:919px;width:1px;height:50px;background:#5a5a5a"></div><div class="a" style="left:1525px;top:919px;width:1px;height:50px;background:#686868"></div><div class="a" style="left:1551px;top:919px;width:1px;height:50px;background:#5a5a5a"></div><div class="a" style="left:1577px;top:919px;width:1px;height:50px;background:#686868"></div><div class="a" style="left:1603px;top:919px;width:1px;height:50px;background:#393939"></div><div class="a" style="left:1629px;top:919px;width:1px;height:50px;background:#4c4c4c"></div><div class="a" style="left:1655px;top:919px;width:1px;height:50px;background:#393939"></div><div class="a" style="left:1681px;top:919px;width:1px;height:50px;background:#4c4c4c"></div><div class="a" style="left:1707px;top:919px;width:1px;height:50px;background:#393939"></div><div class="a" style="left:1734px;top:919px;width:1px;height:50px;background:#4c4c4c"></div><div class="a" style="left:1760px;top:919px;width:1px;height:50px;background:#393939"></div>
<div class="a" style="left:321px;top:919px;width:3px;height:50px;background:#5fc23a"></div>
<div class="a" style="left:0;top:969px;width:1776px;height:18px;background:#727272"></div>
<div class="a" style="left:4px;top:969px;width:1767px;height:14px;border:1px solid #4a4a4a;border-radius:7px;background:linear-gradient(#a8a8a8,#8a8a8a)"></div>
<div class="a" style="left:6px;top:971px;width:10px;height:10px;border-radius:5px;background:#6a6a6a"></div>
<div class="t" style="left:23.4px;top:971px;width:40px;text-align:center">-50</div><div class="t" style="left:75.2px;top:971px;width:40px;text-align:center">-40</div><div class="t" style="left:127.0px;top:971px;width:40px;text-align:center">-30</div><div class="t" style="left:178.8px;top:971px;width:40px;text-align:center">-20</div><div class="t" style="left:230.6px;top:971px;width:40px;text-align:center">-10</div><div class="t" style="left:282.4px;top:971px;width:40px;text-align:center">0</div><div class="t" style="left:334.2px;top:971px;width:40px;text-align:center">10</div><div class="t" style="left:386.1px;top:971px;width:40px;text-align:center">20</div><div class="t" style="left:437.9px;top:971px;width:40px;text-align:center">30</div><div class="t" style="left:489.7px;top:971px;width:40px;text-align:center">40</div><div class="t" style="left:541.5px;top:971px;width:40px;text-align:center">50</div><div class="t" style="left:593.3px;top:971px;width:40px;text-align:center">60</div><div class="t" style="left:645.1px;top:971px;width:40px;text-align:center">70</div><div class="t" style="left:696.9px;top:971px;width:40px;text-align:center">80</div><div class="t" style="left:748.7px;top:971px;width:40px;text-align:center">90</div><div class="t" style="left:800.5px;top:971px;width:40px;text-align:center">100</div><div class="t" style="left:852.3px;top:971px;width:40px;text-align:center">110</div><div class="t" style="left:904.2px;top:971px;width:40px;text-align:center">120</div><div class="t" style="left:956.0px;top:971px;width:40px;text-align:center">130</div><div class="t" style="left:1007.8px;top:971px;width:40px;text-align:center">140</div><div class="t" style="left:1059.6px;top:971px;width:40px;text-align:center">150</div><div class="t" style="left:1111.4px;top:971px;width:40px;text-align:center">160</div><div class="t" style="left:1163.2px;top:971px;width:40px;text-align:center">170</div><div class="t" style="left:1215.0px;top:971px;width:40px;text-align:center">180</div><div class="t" style="left:1266.8px;top:971px;width:40px;text-align:center">190</div><div class="t" style="left:1318.6px;top:971px;width:40px;text-align:center">200</div><div class="t" style="left:1370.5px;top:971px;width:40px;text-align:center">210</div><div class="t" style="left:1422.3px;top:971px;width:40px;text-align:center">220</div><div class="t" style="left:1474.1px;top:971px;width:40px;text-align:center">230</div><div class="t" style="left:1525.9px;top:971px;width:40px;text-align:center">240</div><div class="t" style="left:1577.7px;top:971px;width:40px;text-align:center">250</div><div class="t" style="left:1629.5px;top:971px;width:40px;text-align:center">260</div><div class="t" style="left:1681.3px;top:971px;width:40px;text-align:center">270</div><div class="t" style="left:1733.1px;top:971px;width:40px;text-align:center">280</div>
<div class="a" style="left:0;top:986px;width:1776px;height:27px;background:#6c6c6c;border-top:1px solid #666"></div><div class="a" style="left:1763px;top:971px;width:8px;height:10px;border-radius:5px;background:#6a6a6a"></div><svg class="a" style="left:1777px;top:999px" width="14" height="14"><path d="M0 1L13 14M0 5L9 14M0 9L5 14" stroke="#c0c0c0"/><path d="M0 2L12 14M0 6L8 14" stroke="#333"/></svg>
<svg class="a" style="left:0;top:998px" width="14" height="14"><path d="M0 3L11 14M0 7L7 14M0 11L3 14" stroke="#b0b0b0"/><path d="M0 4L10 14M0 8L6 14" stroke="#222"/></svg>
<svg class="a" style="left:1762px;top:919px" width="14" height="14"><path d="M0 1L13 14M4 1L13 10M8 1L13 6" stroke="#c0c0c0"/><path d="M1 1L13 13M5 1L13 9" stroke="#333"/></svg>
<div class="m" style="left:9px;top:989px;width:32px;height:20px;border-radius:5px"></div>
<svg class="a" style="left:14px;top:992px" width="14" height="14"><circle cx="7" cy="7" r="6" fill="#eee" stroke="#333" stroke-width=".8"/><path d="M7 7L4.5 4.5M7 7L9 10" stroke="#d03030" stroke-width="1.2"/><path d="M7 7L10 5" stroke="#333"/></svg><div class="ud" style="left:31px;top:993px"></div>
<div class="t" style="left:53px;top:995px">View</div><div class="t" style="left:98px;top:995px">Marker</div><div class="t" style="left:153px;top:995px">Frame</div><div class="t" style="left:205px;top:995px">Playback</div>
<div class="b" style="left:262px;top:989px;width:41px;height:20px;border-radius:5px"></div><div class="a" style="left:282px;top:990px;width:1px;height:18px;background:#333"></div>
<svg class="a" style="left:265px;top:992px" width="15" height="15"><circle cx="7.5" cy="7.5" r="6" fill="#eee" stroke="#333" stroke-width=".8"/><path d="M7.5 7.5V1.5A6 6 0 0 1 13.5 7.5Z" fill="#f0a020"/><path d="M7.5 7.5L5 10.5" stroke="#d03030" stroke-width="1.2"/></svg>
<svg class="a" style="left:285px;top:991px" width="15" height="16"><path d="M4 7V5A3.5 3.5 0 0 1 11 5V7" stroke="#222" stroke-width="2.2" fill="none"/><path d="M4 7V5A3.5 3.5 0 0 1 11 5V7" stroke="#eee" stroke-width="1" fill="none"/><rect x="2.5" y="7" width="10" height="7.5" fill="#eee" stroke="#222" stroke-width=".8"/><circle cx="7.5" cy="10.5" r="1" fill="#222"/></svg>
<div class="n" style="left:308px;top:989px;width:118px;height:20px;border-radius:9px 0 0 9px"></div><div class="a" style="left:315px;top:995px;border-top:4px solid transparent;border-bottom:4px solid transparent;border-right:4px solid #8a8a8a"></div><div class="a" style="left:415px;top:995px;border-top:4px solid transparent;border-bottom:4px solid transparent;border-left:4px solid #8a8a8a"></div><div class="t" style="left:324px;top:995px">Start:</div><div class="t" style="left:308px;top:995px;width:102px;text-align:right">1</div>
<div class="n" style="left:425px;top:989px;width:111px;height:20px;border-radius:0 9px 9px 0"></div><div class="a" style="left:432px;top:995px;border-top:4px solid transparent;border-bottom:4px solid transparent;border-right:4px solid #8a8a8a"></div><div class="a" style="left:525px;top:995px;border-top:4px solid transparent;border-bottom:4px solid transparent;border-left:4px solid #8a8a8a"></div><div class="t" style="left:441px;top:995px">End:</div><div class="t" style="left:425px;top:995px;width:95px;text-align:right">250</div>
<div class="n" style="left:541px;top:989px;width:90px;height:20px;border-radius:9px"></div><div class="a" style="left:548px;top:995px;border-top:4px solid transparent;border-bottom:4px solid transparent;border-right:4px solid #8a8a8a"></div><div class="a" style="left:620px;top:995px;border-top:4px solid transparent;border-bottom:4px solid transparent;border-left:4px solid #8a8a8a"></div><div class="t" style="left:541px;top:995px;width:74px;text-align:right">4</div>
<div class="b" style="left:647px;top:989px;width:120px;height:20px;border-radius:5px"></div>
<div class="a" style="left:667px;top:990px;width:1px;height:18px;background:#444"></div><div class="a" style="left:687px;top:990px;width:1px;height:18px;background:#444"></div><div class="a" style="left:706px;top:990px;width:1px;height:18px;background:#444"></div><div class="a" style="left:726px;top:990px;width:1px;height:18px;background:#444"></div><div class="a" style="left:746px;top:990px;width:1px;height:18px;background:#444"></div><svg class="a" style="left:650px;top:992px" width="14" height="14"><path d="M2 2V12" stroke="#fff" stroke-width="2.6"/><path d="M2 2V12" stroke="#111" stroke-width="1"/><path d="M13 2L3 7L13 12Z" fill="#eee" stroke="#111" stroke-width=".8"/></svg><svg class="a" style="left:670px;top:992px" width="14" height="14"><path d="M8 2L2 7L8 12ZM14 2L8 7L14 12Z" fill="#eee" stroke="#111" stroke-width=".8"/></svg><svg class="a" style="left:690px;top:992px" width="14" height="14"><path d="M12 1L3 7L12 13Z" fill="#eee" stroke="#111" stroke-width=".9"/></svg><svg class="a" style="left:709px;top:992px" width="14" height="14"><path d="M3 1L12 7L3 13Z" fill="#eee" stroke="#111" stroke-width=".9"/></svg><svg class="a" style="left:729px;top:992px" width="14" height="14"><path d="M1 2L7 7L1 12ZM7 2L13 7L7 12Z" fill="#eee" stroke="#111" stroke-width=".8"/></svg><svg class="a" style="left:749px;top:992px" width="14" height="14"><path d="M12 2V12" stroke="#111" stroke-width="2"/><path d="M1 2L7 7L1 12ZM6 2L11 7L6 12Z" fill="#eee" stroke="#111" stroke-width=".8"/></svg>
<div class="m" style="left:772px;top:989px;width:115px;height:20px;border-radius:5px;padding-left:8px">No Sync</div><div class="ud" style="left:876px;top:993px"></div>
<div class="b" style="left:903px;top:989px;width:20px;height:20px;border-radius:5px"></div><div class="a" style="left:907px;top:993px;width:12px;height:12px;border-radius:6px;background:radial-gradient(circle at 40% 35%,#ff8060,#d02000);border:1px solid #333"></div>
<div class="m" style="left:928px;top:989px;width:32px;height:20px;border-radius:5px"></div><div class="a" style="left:935px;top:994px;width:8px;height:8px;background:#f8c030;transform:rotate(45deg);border:1px solid #222"></div><div class="ud" style="left:950px;top:993px"></div>
<div class="a" style="left:965px;top:989px;width:171px;height:20px;border:1px solid #1c1c1c;border-radius:5px;background:linear-gradient(#a2a2a2,#b8b8b8);overflow:hidden"><div class="a" style="left:130px;top:0;width:40px;height:18px;background:linear-gradient(#a6a6a6,#8a8a8a);border-left:1px solid #555"></div><div class="a" style="left:150px;top:0;width:1px;height:18px;background:#555"></div></div>
<svg class="a" style="left:968px;top:991px" width="18" height="16"><circle cx="4" cy="12" r="2.5" fill="none" stroke="#e8c040" stroke-width="1.5"/><path d="M4 9.5V2H7" stroke="#e8c040" stroke-width="1.5" fill="none"/><path d="M6 12L12 6" stroke="#eee" stroke-width="2.4"/><circle cx="13" cy="5" r="2.5" fill="none" stroke="#eee" stroke-width="1.5"/></svg>
<svg class="a" style="left:1098px;top:991px" width="16" height="16"><circle cx="4" cy="12" r="2.5" fill="none" stroke="#eee" stroke-width="1.5"/><path d="M6 10L13 3" stroke="#eee" stroke-width="2.2"/><path d="M6 10L13 3" stroke="#222" stroke-width=".5"/></svg>
<svg class="a" style="left:1118px;top:991px" width="16" height="16"><circle cx="4" cy="12" r="2.5" fill="none" stroke="#eee" stroke-width="1.5"/><path d="M6 10L13 3" stroke="#eee" stroke-width="2.2"/><path d="M2 2L14 14" stroke="#e03030" stroke-width="1.6"/></svg>

<div class="a" style="left:0;top:1013px;width:1899px;height:3px;background:#303030"></div>

</body></html>
